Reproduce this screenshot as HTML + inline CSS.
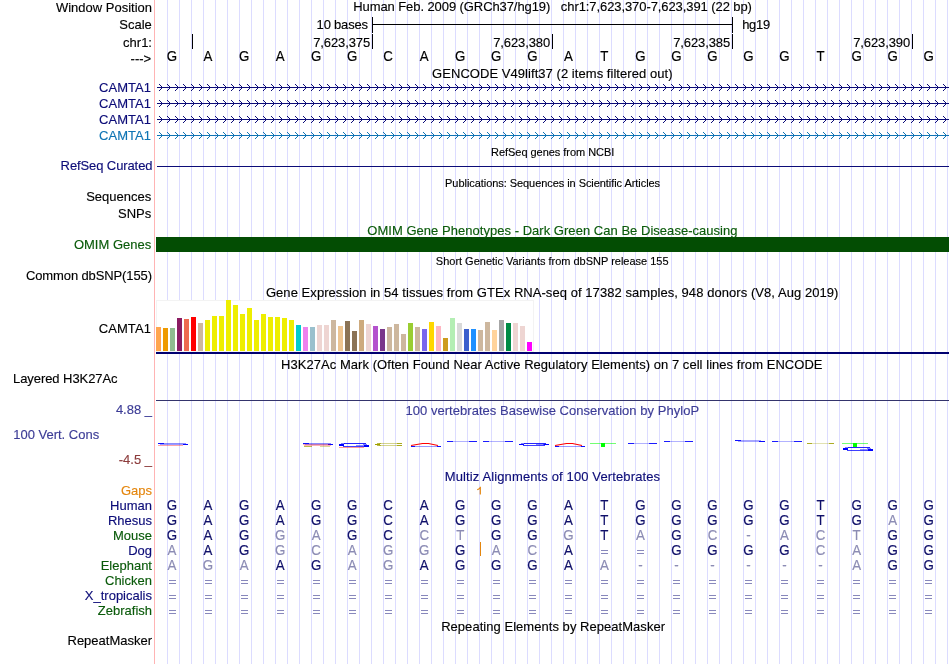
<!DOCTYPE html>
<html><head><meta charset="utf-8"><title>UCSC Genome Browser</title>
<style>html,body{margin:0;padding:0;background:#fff;}body{width:950px;height:664px;overflow:hidden;font-family:"Liberation Sans",sans-serif;}svg{display:block;will-change:transform;}</style>
</head><body>
<svg width="950" height="664" viewBox="0 0 950 664" shape-rendering="crispEdges" font-family="'Liberation Sans', sans-serif" font-size="13.0" fill="#000">
<g id="guides">
<rect x="167" y="0" width="1" height="664" fill="#dcdcff"/>
<rect x="179" y="0" width="1" height="664" fill="#dcdcff"/>
<rect x="191" y="0" width="1" height="664" fill="#dcdcff"/>
<rect x="203" y="0" width="1" height="664" fill="#dcdcff"/>
<rect x="215" y="0" width="1" height="664" fill="#dcdcff"/>
<rect x="227" y="0" width="1" height="664" fill="#dcdcff"/>
<rect x="239" y="0" width="1" height="664" fill="#dcdcff"/>
<rect x="251" y="0" width="1" height="664" fill="#dcdcff"/>
<rect x="263" y="0" width="1" height="664" fill="#dcdcff"/>
<rect x="275" y="0" width="1" height="664" fill="#dcdcff"/>
<rect x="287" y="0" width="1" height="664" fill="#dcdcff"/>
<rect x="299" y="0" width="1" height="664" fill="#dcdcff"/>
<rect x="311" y="0" width="1" height="664" fill="#dcdcff"/>
<rect x="323" y="0" width="1" height="664" fill="#dcdcff"/>
<rect x="335" y="0" width="1" height="664" fill="#dcdcff"/>
<rect x="347" y="0" width="1" height="664" fill="#dcdcff"/>
<rect x="359" y="0" width="1" height="664" fill="#dcdcff"/>
<rect x="371" y="0" width="1" height="664" fill="#dcdcff"/>
<rect x="383" y="0" width="1" height="664" fill="#dcdcff"/>
<rect x="395" y="0" width="1" height="664" fill="#dcdcff"/>
<rect x="407" y="0" width="1" height="664" fill="#dcdcff"/>
<rect x="419" y="0" width="1" height="664" fill="#dcdcff"/>
<rect x="431" y="0" width="1" height="664" fill="#dcdcff"/>
<rect x="443" y="0" width="1" height="664" fill="#dcdcff"/>
<rect x="455" y="0" width="1" height="664" fill="#dcdcff"/>
<rect x="467" y="0" width="1" height="664" fill="#dcdcff"/>
<rect x="479" y="0" width="1" height="664" fill="#dcdcff"/>
<rect x="491" y="0" width="1" height="664" fill="#dcdcff"/>
<rect x="503" y="0" width="1" height="664" fill="#dcdcff"/>
<rect x="515" y="0" width="1" height="664" fill="#dcdcff"/>
<rect x="527" y="0" width="1" height="664" fill="#dcdcff"/>
<rect x="539" y="0" width="1" height="664" fill="#dcdcff"/>
<rect x="551" y="0" width="1" height="664" fill="#dcdcff"/>
<rect x="563" y="0" width="1" height="664" fill="#dcdcff"/>
<rect x="575" y="0" width="1" height="664" fill="#dcdcff"/>
<rect x="587" y="0" width="1" height="664" fill="#dcdcff"/>
<rect x="599" y="0" width="1" height="664" fill="#dcdcff"/>
<rect x="611" y="0" width="1" height="664" fill="#dcdcff"/>
<rect x="623" y="0" width="1" height="664" fill="#dcdcff"/>
<rect x="635" y="0" width="1" height="664" fill="#dcdcff"/>
<rect x="647" y="0" width="1" height="664" fill="#dcdcff"/>
<rect x="659" y="0" width="1" height="664" fill="#dcdcff"/>
<rect x="671" y="0" width="1" height="664" fill="#dcdcff"/>
<rect x="683" y="0" width="1" height="664" fill="#dcdcff"/>
<rect x="695" y="0" width="1" height="664" fill="#dcdcff"/>
<rect x="707" y="0" width="1" height="664" fill="#dcdcff"/>
<rect x="719" y="0" width="1" height="664" fill="#dcdcff"/>
<rect x="731" y="0" width="1" height="664" fill="#dcdcff"/>
<rect x="743" y="0" width="1" height="664" fill="#dcdcff"/>
<rect x="755" y="0" width="1" height="664" fill="#dcdcff"/>
<rect x="767" y="0" width="1" height="664" fill="#dcdcff"/>
<rect x="779" y="0" width="1" height="664" fill="#dcdcff"/>
<rect x="791" y="0" width="1" height="664" fill="#dcdcff"/>
<rect x="803" y="0" width="1" height="664" fill="#dcdcff"/>
<rect x="815" y="0" width="1" height="664" fill="#dcdcff"/>
<rect x="827" y="0" width="1" height="664" fill="#dcdcff"/>
<rect x="839" y="0" width="1" height="664" fill="#dcdcff"/>
<rect x="851" y="0" width="1" height="664" fill="#dcdcff"/>
<rect x="863" y="0" width="1" height="664" fill="#dcdcff"/>
<rect x="875" y="0" width="1" height="664" fill="#dcdcff"/>
<rect x="887" y="0" width="1" height="664" fill="#dcdcff"/>
<rect x="899" y="0" width="1" height="664" fill="#dcdcff"/>
<rect x="911" y="0" width="1" height="664" fill="#dcdcff"/>
<rect x="923" y="0" width="1" height="664" fill="#dcdcff"/>
<rect x="935" y="0" width="1" height="664" fill="#dcdcff"/>
<rect x="947" y="0" width="1" height="664" fill="#dcdcff"/>
<rect x="154" y="0" width="1" height="664" fill="#ffb4b4"/>
</g>
<g id="ruler">
<rect x="372" y="24" width="361" height="1" fill="#000"/>
<rect x="372" y="17" width="1" height="16" fill="#000"/>
<rect x="732" y="17" width="1" height="16" fill="#000"/>
<rect x="192" y="34" width="1" height="15" fill="#000"/>
<rect x="372" y="34" width="1" height="15" fill="#000"/>
<rect x="552" y="34" width="1" height="15" fill="#000"/>
<rect x="732" y="34" width="1" height="15" fill="#000"/>
<rect x="912" y="34" width="1" height="15" fill="#000"/>
</g>
<g id="gencode">
<rect x="157" y="87" width="792" height="1" fill="#0c0c78"/>
<path d="M161 86h1v1h-1zM161 88h1v1h-1zM160 85h1v1h-1zM160 89h1v1h-1zM159 84h1v1h-1zM159 90h1v1h-1zM169 86h1v1h-1zM169 88h1v1h-1zM168 85h1v1h-1zM168 89h1v1h-1zM167 84h1v1h-1zM167 90h1v1h-1zM177 86h1v1h-1zM177 88h1v1h-1zM176 85h1v1h-1zM176 89h1v1h-1zM175 84h1v1h-1zM175 90h1v1h-1zM185 86h1v1h-1zM185 88h1v1h-1zM184 85h1v1h-1zM184 89h1v1h-1zM183 84h1v1h-1zM183 90h1v1h-1zM193 86h1v1h-1zM193 88h1v1h-1zM192 85h1v1h-1zM192 89h1v1h-1zM191 84h1v1h-1zM191 90h1v1h-1zM201 86h1v1h-1zM201 88h1v1h-1zM200 85h1v1h-1zM200 89h1v1h-1zM199 84h1v1h-1zM199 90h1v1h-1zM209 86h1v1h-1zM209 88h1v1h-1zM208 85h1v1h-1zM208 89h1v1h-1zM207 84h1v1h-1zM207 90h1v1h-1zM217 86h1v1h-1zM217 88h1v1h-1zM216 85h1v1h-1zM216 89h1v1h-1zM215 84h1v1h-1zM215 90h1v1h-1zM225 86h1v1h-1zM225 88h1v1h-1zM224 85h1v1h-1zM224 89h1v1h-1zM223 84h1v1h-1zM223 90h1v1h-1zM233 86h1v1h-1zM233 88h1v1h-1zM232 85h1v1h-1zM232 89h1v1h-1zM231 84h1v1h-1zM231 90h1v1h-1zM241 86h1v1h-1zM241 88h1v1h-1zM240 85h1v1h-1zM240 89h1v1h-1zM239 84h1v1h-1zM239 90h1v1h-1zM249 86h1v1h-1zM249 88h1v1h-1zM248 85h1v1h-1zM248 89h1v1h-1zM247 84h1v1h-1zM247 90h1v1h-1zM257 86h1v1h-1zM257 88h1v1h-1zM256 85h1v1h-1zM256 89h1v1h-1zM255 84h1v1h-1zM255 90h1v1h-1zM265 86h1v1h-1zM265 88h1v1h-1zM264 85h1v1h-1zM264 89h1v1h-1zM263 84h1v1h-1zM263 90h1v1h-1zM273 86h1v1h-1zM273 88h1v1h-1zM272 85h1v1h-1zM272 89h1v1h-1zM271 84h1v1h-1zM271 90h1v1h-1zM281 86h1v1h-1zM281 88h1v1h-1zM280 85h1v1h-1zM280 89h1v1h-1zM279 84h1v1h-1zM279 90h1v1h-1zM289 86h1v1h-1zM289 88h1v1h-1zM288 85h1v1h-1zM288 89h1v1h-1zM287 84h1v1h-1zM287 90h1v1h-1zM297 86h1v1h-1zM297 88h1v1h-1zM296 85h1v1h-1zM296 89h1v1h-1zM295 84h1v1h-1zM295 90h1v1h-1zM305 86h1v1h-1zM305 88h1v1h-1zM304 85h1v1h-1zM304 89h1v1h-1zM303 84h1v1h-1zM303 90h1v1h-1zM313 86h1v1h-1zM313 88h1v1h-1zM312 85h1v1h-1zM312 89h1v1h-1zM311 84h1v1h-1zM311 90h1v1h-1zM321 86h1v1h-1zM321 88h1v1h-1zM320 85h1v1h-1zM320 89h1v1h-1zM319 84h1v1h-1zM319 90h1v1h-1zM329 86h1v1h-1zM329 88h1v1h-1zM328 85h1v1h-1zM328 89h1v1h-1zM327 84h1v1h-1zM327 90h1v1h-1zM337 86h1v1h-1zM337 88h1v1h-1zM336 85h1v1h-1zM336 89h1v1h-1zM335 84h1v1h-1zM335 90h1v1h-1zM345 86h1v1h-1zM345 88h1v1h-1zM344 85h1v1h-1zM344 89h1v1h-1zM343 84h1v1h-1zM343 90h1v1h-1zM353 86h1v1h-1zM353 88h1v1h-1zM352 85h1v1h-1zM352 89h1v1h-1zM351 84h1v1h-1zM351 90h1v1h-1zM361 86h1v1h-1zM361 88h1v1h-1zM360 85h1v1h-1zM360 89h1v1h-1zM359 84h1v1h-1zM359 90h1v1h-1zM369 86h1v1h-1zM369 88h1v1h-1zM368 85h1v1h-1zM368 89h1v1h-1zM367 84h1v1h-1zM367 90h1v1h-1zM377 86h1v1h-1zM377 88h1v1h-1zM376 85h1v1h-1zM376 89h1v1h-1zM375 84h1v1h-1zM375 90h1v1h-1zM385 86h1v1h-1zM385 88h1v1h-1zM384 85h1v1h-1zM384 89h1v1h-1zM383 84h1v1h-1zM383 90h1v1h-1zM393 86h1v1h-1zM393 88h1v1h-1zM392 85h1v1h-1zM392 89h1v1h-1zM391 84h1v1h-1zM391 90h1v1h-1zM401 86h1v1h-1zM401 88h1v1h-1zM400 85h1v1h-1zM400 89h1v1h-1zM399 84h1v1h-1zM399 90h1v1h-1zM409 86h1v1h-1zM409 88h1v1h-1zM408 85h1v1h-1zM408 89h1v1h-1zM407 84h1v1h-1zM407 90h1v1h-1zM417 86h1v1h-1zM417 88h1v1h-1zM416 85h1v1h-1zM416 89h1v1h-1zM415 84h1v1h-1zM415 90h1v1h-1zM425 86h1v1h-1zM425 88h1v1h-1zM424 85h1v1h-1zM424 89h1v1h-1zM423 84h1v1h-1zM423 90h1v1h-1zM433 86h1v1h-1zM433 88h1v1h-1zM432 85h1v1h-1zM432 89h1v1h-1zM431 84h1v1h-1zM431 90h1v1h-1zM441 86h1v1h-1zM441 88h1v1h-1zM440 85h1v1h-1zM440 89h1v1h-1zM439 84h1v1h-1zM439 90h1v1h-1zM449 86h1v1h-1zM449 88h1v1h-1zM448 85h1v1h-1zM448 89h1v1h-1zM447 84h1v1h-1zM447 90h1v1h-1zM457 86h1v1h-1zM457 88h1v1h-1zM456 85h1v1h-1zM456 89h1v1h-1zM455 84h1v1h-1zM455 90h1v1h-1zM465 86h1v1h-1zM465 88h1v1h-1zM464 85h1v1h-1zM464 89h1v1h-1zM463 84h1v1h-1zM463 90h1v1h-1zM473 86h1v1h-1zM473 88h1v1h-1zM472 85h1v1h-1zM472 89h1v1h-1zM471 84h1v1h-1zM471 90h1v1h-1zM481 86h1v1h-1zM481 88h1v1h-1zM480 85h1v1h-1zM480 89h1v1h-1zM479 84h1v1h-1zM479 90h1v1h-1zM489 86h1v1h-1zM489 88h1v1h-1zM488 85h1v1h-1zM488 89h1v1h-1zM487 84h1v1h-1zM487 90h1v1h-1zM497 86h1v1h-1zM497 88h1v1h-1zM496 85h1v1h-1zM496 89h1v1h-1zM495 84h1v1h-1zM495 90h1v1h-1zM505 86h1v1h-1zM505 88h1v1h-1zM504 85h1v1h-1zM504 89h1v1h-1zM503 84h1v1h-1zM503 90h1v1h-1zM513 86h1v1h-1zM513 88h1v1h-1zM512 85h1v1h-1zM512 89h1v1h-1zM511 84h1v1h-1zM511 90h1v1h-1zM521 86h1v1h-1zM521 88h1v1h-1zM520 85h1v1h-1zM520 89h1v1h-1zM519 84h1v1h-1zM519 90h1v1h-1zM529 86h1v1h-1zM529 88h1v1h-1zM528 85h1v1h-1zM528 89h1v1h-1zM527 84h1v1h-1zM527 90h1v1h-1zM537 86h1v1h-1zM537 88h1v1h-1zM536 85h1v1h-1zM536 89h1v1h-1zM535 84h1v1h-1zM535 90h1v1h-1zM545 86h1v1h-1zM545 88h1v1h-1zM544 85h1v1h-1zM544 89h1v1h-1zM543 84h1v1h-1zM543 90h1v1h-1zM553 86h1v1h-1zM553 88h1v1h-1zM552 85h1v1h-1zM552 89h1v1h-1zM551 84h1v1h-1zM551 90h1v1h-1zM561 86h1v1h-1zM561 88h1v1h-1zM560 85h1v1h-1zM560 89h1v1h-1zM559 84h1v1h-1zM559 90h1v1h-1zM569 86h1v1h-1zM569 88h1v1h-1zM568 85h1v1h-1zM568 89h1v1h-1zM567 84h1v1h-1zM567 90h1v1h-1zM577 86h1v1h-1zM577 88h1v1h-1zM576 85h1v1h-1zM576 89h1v1h-1zM575 84h1v1h-1zM575 90h1v1h-1zM585 86h1v1h-1zM585 88h1v1h-1zM584 85h1v1h-1zM584 89h1v1h-1zM583 84h1v1h-1zM583 90h1v1h-1zM593 86h1v1h-1zM593 88h1v1h-1zM592 85h1v1h-1zM592 89h1v1h-1zM591 84h1v1h-1zM591 90h1v1h-1zM601 86h1v1h-1zM601 88h1v1h-1zM600 85h1v1h-1zM600 89h1v1h-1zM599 84h1v1h-1zM599 90h1v1h-1zM609 86h1v1h-1zM609 88h1v1h-1zM608 85h1v1h-1zM608 89h1v1h-1zM607 84h1v1h-1zM607 90h1v1h-1zM617 86h1v1h-1zM617 88h1v1h-1zM616 85h1v1h-1zM616 89h1v1h-1zM615 84h1v1h-1zM615 90h1v1h-1zM625 86h1v1h-1zM625 88h1v1h-1zM624 85h1v1h-1zM624 89h1v1h-1zM623 84h1v1h-1zM623 90h1v1h-1zM633 86h1v1h-1zM633 88h1v1h-1zM632 85h1v1h-1zM632 89h1v1h-1zM631 84h1v1h-1zM631 90h1v1h-1zM641 86h1v1h-1zM641 88h1v1h-1zM640 85h1v1h-1zM640 89h1v1h-1zM639 84h1v1h-1zM639 90h1v1h-1zM649 86h1v1h-1zM649 88h1v1h-1zM648 85h1v1h-1zM648 89h1v1h-1zM647 84h1v1h-1zM647 90h1v1h-1zM657 86h1v1h-1zM657 88h1v1h-1zM656 85h1v1h-1zM656 89h1v1h-1zM655 84h1v1h-1zM655 90h1v1h-1zM665 86h1v1h-1zM665 88h1v1h-1zM664 85h1v1h-1zM664 89h1v1h-1zM663 84h1v1h-1zM663 90h1v1h-1zM673 86h1v1h-1zM673 88h1v1h-1zM672 85h1v1h-1zM672 89h1v1h-1zM671 84h1v1h-1zM671 90h1v1h-1zM681 86h1v1h-1zM681 88h1v1h-1zM680 85h1v1h-1zM680 89h1v1h-1zM679 84h1v1h-1zM679 90h1v1h-1zM689 86h1v1h-1zM689 88h1v1h-1zM688 85h1v1h-1zM688 89h1v1h-1zM687 84h1v1h-1zM687 90h1v1h-1zM697 86h1v1h-1zM697 88h1v1h-1zM696 85h1v1h-1zM696 89h1v1h-1zM695 84h1v1h-1zM695 90h1v1h-1zM705 86h1v1h-1zM705 88h1v1h-1zM704 85h1v1h-1zM704 89h1v1h-1zM703 84h1v1h-1zM703 90h1v1h-1zM713 86h1v1h-1zM713 88h1v1h-1zM712 85h1v1h-1zM712 89h1v1h-1zM711 84h1v1h-1zM711 90h1v1h-1zM721 86h1v1h-1zM721 88h1v1h-1zM720 85h1v1h-1zM720 89h1v1h-1zM719 84h1v1h-1zM719 90h1v1h-1zM729 86h1v1h-1zM729 88h1v1h-1zM728 85h1v1h-1zM728 89h1v1h-1zM727 84h1v1h-1zM727 90h1v1h-1zM737 86h1v1h-1zM737 88h1v1h-1zM736 85h1v1h-1zM736 89h1v1h-1zM735 84h1v1h-1zM735 90h1v1h-1zM745 86h1v1h-1zM745 88h1v1h-1zM744 85h1v1h-1zM744 89h1v1h-1zM743 84h1v1h-1zM743 90h1v1h-1zM753 86h1v1h-1zM753 88h1v1h-1zM752 85h1v1h-1zM752 89h1v1h-1zM751 84h1v1h-1zM751 90h1v1h-1zM761 86h1v1h-1zM761 88h1v1h-1zM760 85h1v1h-1zM760 89h1v1h-1zM759 84h1v1h-1zM759 90h1v1h-1zM769 86h1v1h-1zM769 88h1v1h-1zM768 85h1v1h-1zM768 89h1v1h-1zM767 84h1v1h-1zM767 90h1v1h-1zM777 86h1v1h-1zM777 88h1v1h-1zM776 85h1v1h-1zM776 89h1v1h-1zM775 84h1v1h-1zM775 90h1v1h-1zM785 86h1v1h-1zM785 88h1v1h-1zM784 85h1v1h-1zM784 89h1v1h-1zM783 84h1v1h-1zM783 90h1v1h-1zM793 86h1v1h-1zM793 88h1v1h-1zM792 85h1v1h-1zM792 89h1v1h-1zM791 84h1v1h-1zM791 90h1v1h-1zM801 86h1v1h-1zM801 88h1v1h-1zM800 85h1v1h-1zM800 89h1v1h-1zM799 84h1v1h-1zM799 90h1v1h-1zM809 86h1v1h-1zM809 88h1v1h-1zM808 85h1v1h-1zM808 89h1v1h-1zM807 84h1v1h-1zM807 90h1v1h-1zM817 86h1v1h-1zM817 88h1v1h-1zM816 85h1v1h-1zM816 89h1v1h-1zM815 84h1v1h-1zM815 90h1v1h-1zM825 86h1v1h-1zM825 88h1v1h-1zM824 85h1v1h-1zM824 89h1v1h-1zM823 84h1v1h-1zM823 90h1v1h-1zM833 86h1v1h-1zM833 88h1v1h-1zM832 85h1v1h-1zM832 89h1v1h-1zM831 84h1v1h-1zM831 90h1v1h-1zM841 86h1v1h-1zM841 88h1v1h-1zM840 85h1v1h-1zM840 89h1v1h-1zM839 84h1v1h-1zM839 90h1v1h-1zM849 86h1v1h-1zM849 88h1v1h-1zM848 85h1v1h-1zM848 89h1v1h-1zM847 84h1v1h-1zM847 90h1v1h-1zM857 86h1v1h-1zM857 88h1v1h-1zM856 85h1v1h-1zM856 89h1v1h-1zM855 84h1v1h-1zM855 90h1v1h-1zM865 86h1v1h-1zM865 88h1v1h-1zM864 85h1v1h-1zM864 89h1v1h-1zM863 84h1v1h-1zM863 90h1v1h-1zM873 86h1v1h-1zM873 88h1v1h-1zM872 85h1v1h-1zM872 89h1v1h-1zM871 84h1v1h-1zM871 90h1v1h-1zM881 86h1v1h-1zM881 88h1v1h-1zM880 85h1v1h-1zM880 89h1v1h-1zM879 84h1v1h-1zM879 90h1v1h-1zM889 86h1v1h-1zM889 88h1v1h-1zM888 85h1v1h-1zM888 89h1v1h-1zM887 84h1v1h-1zM887 90h1v1h-1zM897 86h1v1h-1zM897 88h1v1h-1zM896 85h1v1h-1zM896 89h1v1h-1zM895 84h1v1h-1zM895 90h1v1h-1zM905 86h1v1h-1zM905 88h1v1h-1zM904 85h1v1h-1zM904 89h1v1h-1zM903 84h1v1h-1zM903 90h1v1h-1zM913 86h1v1h-1zM913 88h1v1h-1zM912 85h1v1h-1zM912 89h1v1h-1zM911 84h1v1h-1zM911 90h1v1h-1zM921 86h1v1h-1zM921 88h1v1h-1zM920 85h1v1h-1zM920 89h1v1h-1zM919 84h1v1h-1zM919 90h1v1h-1zM929 86h1v1h-1zM929 88h1v1h-1zM928 85h1v1h-1zM928 89h1v1h-1zM927 84h1v1h-1zM927 90h1v1h-1zM937 86h1v1h-1zM937 88h1v1h-1zM936 85h1v1h-1zM936 89h1v1h-1zM935 84h1v1h-1zM935 90h1v1h-1zM945 86h1v1h-1zM945 88h1v1h-1zM944 85h1v1h-1zM944 89h1v1h-1zM943 84h1v1h-1zM943 90h1v1h-1z" fill="#0c0c78"/>
<rect x="157" y="103" width="792" height="1" fill="#0c0c78"/>
<path d="M161 102h1v1h-1zM161 104h1v1h-1zM160 101h1v1h-1zM160 105h1v1h-1zM159 100h1v1h-1zM159 106h1v1h-1zM169 102h1v1h-1zM169 104h1v1h-1zM168 101h1v1h-1zM168 105h1v1h-1zM167 100h1v1h-1zM167 106h1v1h-1zM177 102h1v1h-1zM177 104h1v1h-1zM176 101h1v1h-1zM176 105h1v1h-1zM175 100h1v1h-1zM175 106h1v1h-1zM185 102h1v1h-1zM185 104h1v1h-1zM184 101h1v1h-1zM184 105h1v1h-1zM183 100h1v1h-1zM183 106h1v1h-1zM193 102h1v1h-1zM193 104h1v1h-1zM192 101h1v1h-1zM192 105h1v1h-1zM191 100h1v1h-1zM191 106h1v1h-1zM201 102h1v1h-1zM201 104h1v1h-1zM200 101h1v1h-1zM200 105h1v1h-1zM199 100h1v1h-1zM199 106h1v1h-1zM209 102h1v1h-1zM209 104h1v1h-1zM208 101h1v1h-1zM208 105h1v1h-1zM207 100h1v1h-1zM207 106h1v1h-1zM217 102h1v1h-1zM217 104h1v1h-1zM216 101h1v1h-1zM216 105h1v1h-1zM215 100h1v1h-1zM215 106h1v1h-1zM225 102h1v1h-1zM225 104h1v1h-1zM224 101h1v1h-1zM224 105h1v1h-1zM223 100h1v1h-1zM223 106h1v1h-1zM233 102h1v1h-1zM233 104h1v1h-1zM232 101h1v1h-1zM232 105h1v1h-1zM231 100h1v1h-1zM231 106h1v1h-1zM241 102h1v1h-1zM241 104h1v1h-1zM240 101h1v1h-1zM240 105h1v1h-1zM239 100h1v1h-1zM239 106h1v1h-1zM249 102h1v1h-1zM249 104h1v1h-1zM248 101h1v1h-1zM248 105h1v1h-1zM247 100h1v1h-1zM247 106h1v1h-1zM257 102h1v1h-1zM257 104h1v1h-1zM256 101h1v1h-1zM256 105h1v1h-1zM255 100h1v1h-1zM255 106h1v1h-1zM265 102h1v1h-1zM265 104h1v1h-1zM264 101h1v1h-1zM264 105h1v1h-1zM263 100h1v1h-1zM263 106h1v1h-1zM273 102h1v1h-1zM273 104h1v1h-1zM272 101h1v1h-1zM272 105h1v1h-1zM271 100h1v1h-1zM271 106h1v1h-1zM281 102h1v1h-1zM281 104h1v1h-1zM280 101h1v1h-1zM280 105h1v1h-1zM279 100h1v1h-1zM279 106h1v1h-1zM289 102h1v1h-1zM289 104h1v1h-1zM288 101h1v1h-1zM288 105h1v1h-1zM287 100h1v1h-1zM287 106h1v1h-1zM297 102h1v1h-1zM297 104h1v1h-1zM296 101h1v1h-1zM296 105h1v1h-1zM295 100h1v1h-1zM295 106h1v1h-1zM305 102h1v1h-1zM305 104h1v1h-1zM304 101h1v1h-1zM304 105h1v1h-1zM303 100h1v1h-1zM303 106h1v1h-1zM313 102h1v1h-1zM313 104h1v1h-1zM312 101h1v1h-1zM312 105h1v1h-1zM311 100h1v1h-1zM311 106h1v1h-1zM321 102h1v1h-1zM321 104h1v1h-1zM320 101h1v1h-1zM320 105h1v1h-1zM319 100h1v1h-1zM319 106h1v1h-1zM329 102h1v1h-1zM329 104h1v1h-1zM328 101h1v1h-1zM328 105h1v1h-1zM327 100h1v1h-1zM327 106h1v1h-1zM337 102h1v1h-1zM337 104h1v1h-1zM336 101h1v1h-1zM336 105h1v1h-1zM335 100h1v1h-1zM335 106h1v1h-1zM345 102h1v1h-1zM345 104h1v1h-1zM344 101h1v1h-1zM344 105h1v1h-1zM343 100h1v1h-1zM343 106h1v1h-1zM353 102h1v1h-1zM353 104h1v1h-1zM352 101h1v1h-1zM352 105h1v1h-1zM351 100h1v1h-1zM351 106h1v1h-1zM361 102h1v1h-1zM361 104h1v1h-1zM360 101h1v1h-1zM360 105h1v1h-1zM359 100h1v1h-1zM359 106h1v1h-1zM369 102h1v1h-1zM369 104h1v1h-1zM368 101h1v1h-1zM368 105h1v1h-1zM367 100h1v1h-1zM367 106h1v1h-1zM377 102h1v1h-1zM377 104h1v1h-1zM376 101h1v1h-1zM376 105h1v1h-1zM375 100h1v1h-1zM375 106h1v1h-1zM385 102h1v1h-1zM385 104h1v1h-1zM384 101h1v1h-1zM384 105h1v1h-1zM383 100h1v1h-1zM383 106h1v1h-1zM393 102h1v1h-1zM393 104h1v1h-1zM392 101h1v1h-1zM392 105h1v1h-1zM391 100h1v1h-1zM391 106h1v1h-1zM401 102h1v1h-1zM401 104h1v1h-1zM400 101h1v1h-1zM400 105h1v1h-1zM399 100h1v1h-1zM399 106h1v1h-1zM409 102h1v1h-1zM409 104h1v1h-1zM408 101h1v1h-1zM408 105h1v1h-1zM407 100h1v1h-1zM407 106h1v1h-1zM417 102h1v1h-1zM417 104h1v1h-1zM416 101h1v1h-1zM416 105h1v1h-1zM415 100h1v1h-1zM415 106h1v1h-1zM425 102h1v1h-1zM425 104h1v1h-1zM424 101h1v1h-1zM424 105h1v1h-1zM423 100h1v1h-1zM423 106h1v1h-1zM433 102h1v1h-1zM433 104h1v1h-1zM432 101h1v1h-1zM432 105h1v1h-1zM431 100h1v1h-1zM431 106h1v1h-1zM441 102h1v1h-1zM441 104h1v1h-1zM440 101h1v1h-1zM440 105h1v1h-1zM439 100h1v1h-1zM439 106h1v1h-1zM449 102h1v1h-1zM449 104h1v1h-1zM448 101h1v1h-1zM448 105h1v1h-1zM447 100h1v1h-1zM447 106h1v1h-1zM457 102h1v1h-1zM457 104h1v1h-1zM456 101h1v1h-1zM456 105h1v1h-1zM455 100h1v1h-1zM455 106h1v1h-1zM465 102h1v1h-1zM465 104h1v1h-1zM464 101h1v1h-1zM464 105h1v1h-1zM463 100h1v1h-1zM463 106h1v1h-1zM473 102h1v1h-1zM473 104h1v1h-1zM472 101h1v1h-1zM472 105h1v1h-1zM471 100h1v1h-1zM471 106h1v1h-1zM481 102h1v1h-1zM481 104h1v1h-1zM480 101h1v1h-1zM480 105h1v1h-1zM479 100h1v1h-1zM479 106h1v1h-1zM489 102h1v1h-1zM489 104h1v1h-1zM488 101h1v1h-1zM488 105h1v1h-1zM487 100h1v1h-1zM487 106h1v1h-1zM497 102h1v1h-1zM497 104h1v1h-1zM496 101h1v1h-1zM496 105h1v1h-1zM495 100h1v1h-1zM495 106h1v1h-1zM505 102h1v1h-1zM505 104h1v1h-1zM504 101h1v1h-1zM504 105h1v1h-1zM503 100h1v1h-1zM503 106h1v1h-1zM513 102h1v1h-1zM513 104h1v1h-1zM512 101h1v1h-1zM512 105h1v1h-1zM511 100h1v1h-1zM511 106h1v1h-1zM521 102h1v1h-1zM521 104h1v1h-1zM520 101h1v1h-1zM520 105h1v1h-1zM519 100h1v1h-1zM519 106h1v1h-1zM529 102h1v1h-1zM529 104h1v1h-1zM528 101h1v1h-1zM528 105h1v1h-1zM527 100h1v1h-1zM527 106h1v1h-1zM537 102h1v1h-1zM537 104h1v1h-1zM536 101h1v1h-1zM536 105h1v1h-1zM535 100h1v1h-1zM535 106h1v1h-1zM545 102h1v1h-1zM545 104h1v1h-1zM544 101h1v1h-1zM544 105h1v1h-1zM543 100h1v1h-1zM543 106h1v1h-1zM553 102h1v1h-1zM553 104h1v1h-1zM552 101h1v1h-1zM552 105h1v1h-1zM551 100h1v1h-1zM551 106h1v1h-1zM561 102h1v1h-1zM561 104h1v1h-1zM560 101h1v1h-1zM560 105h1v1h-1zM559 100h1v1h-1zM559 106h1v1h-1zM569 102h1v1h-1zM569 104h1v1h-1zM568 101h1v1h-1zM568 105h1v1h-1zM567 100h1v1h-1zM567 106h1v1h-1zM577 102h1v1h-1zM577 104h1v1h-1zM576 101h1v1h-1zM576 105h1v1h-1zM575 100h1v1h-1zM575 106h1v1h-1zM585 102h1v1h-1zM585 104h1v1h-1zM584 101h1v1h-1zM584 105h1v1h-1zM583 100h1v1h-1zM583 106h1v1h-1zM593 102h1v1h-1zM593 104h1v1h-1zM592 101h1v1h-1zM592 105h1v1h-1zM591 100h1v1h-1zM591 106h1v1h-1zM601 102h1v1h-1zM601 104h1v1h-1zM600 101h1v1h-1zM600 105h1v1h-1zM599 100h1v1h-1zM599 106h1v1h-1zM609 102h1v1h-1zM609 104h1v1h-1zM608 101h1v1h-1zM608 105h1v1h-1zM607 100h1v1h-1zM607 106h1v1h-1zM617 102h1v1h-1zM617 104h1v1h-1zM616 101h1v1h-1zM616 105h1v1h-1zM615 100h1v1h-1zM615 106h1v1h-1zM625 102h1v1h-1zM625 104h1v1h-1zM624 101h1v1h-1zM624 105h1v1h-1zM623 100h1v1h-1zM623 106h1v1h-1zM633 102h1v1h-1zM633 104h1v1h-1zM632 101h1v1h-1zM632 105h1v1h-1zM631 100h1v1h-1zM631 106h1v1h-1zM641 102h1v1h-1zM641 104h1v1h-1zM640 101h1v1h-1zM640 105h1v1h-1zM639 100h1v1h-1zM639 106h1v1h-1zM649 102h1v1h-1zM649 104h1v1h-1zM648 101h1v1h-1zM648 105h1v1h-1zM647 100h1v1h-1zM647 106h1v1h-1zM657 102h1v1h-1zM657 104h1v1h-1zM656 101h1v1h-1zM656 105h1v1h-1zM655 100h1v1h-1zM655 106h1v1h-1zM665 102h1v1h-1zM665 104h1v1h-1zM664 101h1v1h-1zM664 105h1v1h-1zM663 100h1v1h-1zM663 106h1v1h-1zM673 102h1v1h-1zM673 104h1v1h-1zM672 101h1v1h-1zM672 105h1v1h-1zM671 100h1v1h-1zM671 106h1v1h-1zM681 102h1v1h-1zM681 104h1v1h-1zM680 101h1v1h-1zM680 105h1v1h-1zM679 100h1v1h-1zM679 106h1v1h-1zM689 102h1v1h-1zM689 104h1v1h-1zM688 101h1v1h-1zM688 105h1v1h-1zM687 100h1v1h-1zM687 106h1v1h-1zM697 102h1v1h-1zM697 104h1v1h-1zM696 101h1v1h-1zM696 105h1v1h-1zM695 100h1v1h-1zM695 106h1v1h-1zM705 102h1v1h-1zM705 104h1v1h-1zM704 101h1v1h-1zM704 105h1v1h-1zM703 100h1v1h-1zM703 106h1v1h-1zM713 102h1v1h-1zM713 104h1v1h-1zM712 101h1v1h-1zM712 105h1v1h-1zM711 100h1v1h-1zM711 106h1v1h-1zM721 102h1v1h-1zM721 104h1v1h-1zM720 101h1v1h-1zM720 105h1v1h-1zM719 100h1v1h-1zM719 106h1v1h-1zM729 102h1v1h-1zM729 104h1v1h-1zM728 101h1v1h-1zM728 105h1v1h-1zM727 100h1v1h-1zM727 106h1v1h-1zM737 102h1v1h-1zM737 104h1v1h-1zM736 101h1v1h-1zM736 105h1v1h-1zM735 100h1v1h-1zM735 106h1v1h-1zM745 102h1v1h-1zM745 104h1v1h-1zM744 101h1v1h-1zM744 105h1v1h-1zM743 100h1v1h-1zM743 106h1v1h-1zM753 102h1v1h-1zM753 104h1v1h-1zM752 101h1v1h-1zM752 105h1v1h-1zM751 100h1v1h-1zM751 106h1v1h-1zM761 102h1v1h-1zM761 104h1v1h-1zM760 101h1v1h-1zM760 105h1v1h-1zM759 100h1v1h-1zM759 106h1v1h-1zM769 102h1v1h-1zM769 104h1v1h-1zM768 101h1v1h-1zM768 105h1v1h-1zM767 100h1v1h-1zM767 106h1v1h-1zM777 102h1v1h-1zM777 104h1v1h-1zM776 101h1v1h-1zM776 105h1v1h-1zM775 100h1v1h-1zM775 106h1v1h-1zM785 102h1v1h-1zM785 104h1v1h-1zM784 101h1v1h-1zM784 105h1v1h-1zM783 100h1v1h-1zM783 106h1v1h-1zM793 102h1v1h-1zM793 104h1v1h-1zM792 101h1v1h-1zM792 105h1v1h-1zM791 100h1v1h-1zM791 106h1v1h-1zM801 102h1v1h-1zM801 104h1v1h-1zM800 101h1v1h-1zM800 105h1v1h-1zM799 100h1v1h-1zM799 106h1v1h-1zM809 102h1v1h-1zM809 104h1v1h-1zM808 101h1v1h-1zM808 105h1v1h-1zM807 100h1v1h-1zM807 106h1v1h-1zM817 102h1v1h-1zM817 104h1v1h-1zM816 101h1v1h-1zM816 105h1v1h-1zM815 100h1v1h-1zM815 106h1v1h-1zM825 102h1v1h-1zM825 104h1v1h-1zM824 101h1v1h-1zM824 105h1v1h-1zM823 100h1v1h-1zM823 106h1v1h-1zM833 102h1v1h-1zM833 104h1v1h-1zM832 101h1v1h-1zM832 105h1v1h-1zM831 100h1v1h-1zM831 106h1v1h-1zM841 102h1v1h-1zM841 104h1v1h-1zM840 101h1v1h-1zM840 105h1v1h-1zM839 100h1v1h-1zM839 106h1v1h-1zM849 102h1v1h-1zM849 104h1v1h-1zM848 101h1v1h-1zM848 105h1v1h-1zM847 100h1v1h-1zM847 106h1v1h-1zM857 102h1v1h-1zM857 104h1v1h-1zM856 101h1v1h-1zM856 105h1v1h-1zM855 100h1v1h-1zM855 106h1v1h-1zM865 102h1v1h-1zM865 104h1v1h-1zM864 101h1v1h-1zM864 105h1v1h-1zM863 100h1v1h-1zM863 106h1v1h-1zM873 102h1v1h-1zM873 104h1v1h-1zM872 101h1v1h-1zM872 105h1v1h-1zM871 100h1v1h-1zM871 106h1v1h-1zM881 102h1v1h-1zM881 104h1v1h-1zM880 101h1v1h-1zM880 105h1v1h-1zM879 100h1v1h-1zM879 106h1v1h-1zM889 102h1v1h-1zM889 104h1v1h-1zM888 101h1v1h-1zM888 105h1v1h-1zM887 100h1v1h-1zM887 106h1v1h-1zM897 102h1v1h-1zM897 104h1v1h-1zM896 101h1v1h-1zM896 105h1v1h-1zM895 100h1v1h-1zM895 106h1v1h-1zM905 102h1v1h-1zM905 104h1v1h-1zM904 101h1v1h-1zM904 105h1v1h-1zM903 100h1v1h-1zM903 106h1v1h-1zM913 102h1v1h-1zM913 104h1v1h-1zM912 101h1v1h-1zM912 105h1v1h-1zM911 100h1v1h-1zM911 106h1v1h-1zM921 102h1v1h-1zM921 104h1v1h-1zM920 101h1v1h-1zM920 105h1v1h-1zM919 100h1v1h-1zM919 106h1v1h-1zM929 102h1v1h-1zM929 104h1v1h-1zM928 101h1v1h-1zM928 105h1v1h-1zM927 100h1v1h-1zM927 106h1v1h-1zM937 102h1v1h-1zM937 104h1v1h-1zM936 101h1v1h-1zM936 105h1v1h-1zM935 100h1v1h-1zM935 106h1v1h-1zM945 102h1v1h-1zM945 104h1v1h-1zM944 101h1v1h-1zM944 105h1v1h-1zM943 100h1v1h-1zM943 106h1v1h-1z" fill="#0c0c78"/>
<rect x="157" y="119" width="792" height="1" fill="#0c0c78"/>
<path d="M161 118h1v1h-1zM161 120h1v1h-1zM160 117h1v1h-1zM160 121h1v1h-1zM159 116h1v1h-1zM159 122h1v1h-1zM169 118h1v1h-1zM169 120h1v1h-1zM168 117h1v1h-1zM168 121h1v1h-1zM167 116h1v1h-1zM167 122h1v1h-1zM177 118h1v1h-1zM177 120h1v1h-1zM176 117h1v1h-1zM176 121h1v1h-1zM175 116h1v1h-1zM175 122h1v1h-1zM185 118h1v1h-1zM185 120h1v1h-1zM184 117h1v1h-1zM184 121h1v1h-1zM183 116h1v1h-1zM183 122h1v1h-1zM193 118h1v1h-1zM193 120h1v1h-1zM192 117h1v1h-1zM192 121h1v1h-1zM191 116h1v1h-1zM191 122h1v1h-1zM201 118h1v1h-1zM201 120h1v1h-1zM200 117h1v1h-1zM200 121h1v1h-1zM199 116h1v1h-1zM199 122h1v1h-1zM209 118h1v1h-1zM209 120h1v1h-1zM208 117h1v1h-1zM208 121h1v1h-1zM207 116h1v1h-1zM207 122h1v1h-1zM217 118h1v1h-1zM217 120h1v1h-1zM216 117h1v1h-1zM216 121h1v1h-1zM215 116h1v1h-1zM215 122h1v1h-1zM225 118h1v1h-1zM225 120h1v1h-1zM224 117h1v1h-1zM224 121h1v1h-1zM223 116h1v1h-1zM223 122h1v1h-1zM233 118h1v1h-1zM233 120h1v1h-1zM232 117h1v1h-1zM232 121h1v1h-1zM231 116h1v1h-1zM231 122h1v1h-1zM241 118h1v1h-1zM241 120h1v1h-1zM240 117h1v1h-1zM240 121h1v1h-1zM239 116h1v1h-1zM239 122h1v1h-1zM249 118h1v1h-1zM249 120h1v1h-1zM248 117h1v1h-1zM248 121h1v1h-1zM247 116h1v1h-1zM247 122h1v1h-1zM257 118h1v1h-1zM257 120h1v1h-1zM256 117h1v1h-1zM256 121h1v1h-1zM255 116h1v1h-1zM255 122h1v1h-1zM265 118h1v1h-1zM265 120h1v1h-1zM264 117h1v1h-1zM264 121h1v1h-1zM263 116h1v1h-1zM263 122h1v1h-1zM273 118h1v1h-1zM273 120h1v1h-1zM272 117h1v1h-1zM272 121h1v1h-1zM271 116h1v1h-1zM271 122h1v1h-1zM281 118h1v1h-1zM281 120h1v1h-1zM280 117h1v1h-1zM280 121h1v1h-1zM279 116h1v1h-1zM279 122h1v1h-1zM289 118h1v1h-1zM289 120h1v1h-1zM288 117h1v1h-1zM288 121h1v1h-1zM287 116h1v1h-1zM287 122h1v1h-1zM297 118h1v1h-1zM297 120h1v1h-1zM296 117h1v1h-1zM296 121h1v1h-1zM295 116h1v1h-1zM295 122h1v1h-1zM305 118h1v1h-1zM305 120h1v1h-1zM304 117h1v1h-1zM304 121h1v1h-1zM303 116h1v1h-1zM303 122h1v1h-1zM313 118h1v1h-1zM313 120h1v1h-1zM312 117h1v1h-1zM312 121h1v1h-1zM311 116h1v1h-1zM311 122h1v1h-1zM321 118h1v1h-1zM321 120h1v1h-1zM320 117h1v1h-1zM320 121h1v1h-1zM319 116h1v1h-1zM319 122h1v1h-1zM329 118h1v1h-1zM329 120h1v1h-1zM328 117h1v1h-1zM328 121h1v1h-1zM327 116h1v1h-1zM327 122h1v1h-1zM337 118h1v1h-1zM337 120h1v1h-1zM336 117h1v1h-1zM336 121h1v1h-1zM335 116h1v1h-1zM335 122h1v1h-1zM345 118h1v1h-1zM345 120h1v1h-1zM344 117h1v1h-1zM344 121h1v1h-1zM343 116h1v1h-1zM343 122h1v1h-1zM353 118h1v1h-1zM353 120h1v1h-1zM352 117h1v1h-1zM352 121h1v1h-1zM351 116h1v1h-1zM351 122h1v1h-1zM361 118h1v1h-1zM361 120h1v1h-1zM360 117h1v1h-1zM360 121h1v1h-1zM359 116h1v1h-1zM359 122h1v1h-1zM369 118h1v1h-1zM369 120h1v1h-1zM368 117h1v1h-1zM368 121h1v1h-1zM367 116h1v1h-1zM367 122h1v1h-1zM377 118h1v1h-1zM377 120h1v1h-1zM376 117h1v1h-1zM376 121h1v1h-1zM375 116h1v1h-1zM375 122h1v1h-1zM385 118h1v1h-1zM385 120h1v1h-1zM384 117h1v1h-1zM384 121h1v1h-1zM383 116h1v1h-1zM383 122h1v1h-1zM393 118h1v1h-1zM393 120h1v1h-1zM392 117h1v1h-1zM392 121h1v1h-1zM391 116h1v1h-1zM391 122h1v1h-1zM401 118h1v1h-1zM401 120h1v1h-1zM400 117h1v1h-1zM400 121h1v1h-1zM399 116h1v1h-1zM399 122h1v1h-1zM409 118h1v1h-1zM409 120h1v1h-1zM408 117h1v1h-1zM408 121h1v1h-1zM407 116h1v1h-1zM407 122h1v1h-1zM417 118h1v1h-1zM417 120h1v1h-1zM416 117h1v1h-1zM416 121h1v1h-1zM415 116h1v1h-1zM415 122h1v1h-1zM425 118h1v1h-1zM425 120h1v1h-1zM424 117h1v1h-1zM424 121h1v1h-1zM423 116h1v1h-1zM423 122h1v1h-1zM433 118h1v1h-1zM433 120h1v1h-1zM432 117h1v1h-1zM432 121h1v1h-1zM431 116h1v1h-1zM431 122h1v1h-1zM441 118h1v1h-1zM441 120h1v1h-1zM440 117h1v1h-1zM440 121h1v1h-1zM439 116h1v1h-1zM439 122h1v1h-1zM449 118h1v1h-1zM449 120h1v1h-1zM448 117h1v1h-1zM448 121h1v1h-1zM447 116h1v1h-1zM447 122h1v1h-1zM457 118h1v1h-1zM457 120h1v1h-1zM456 117h1v1h-1zM456 121h1v1h-1zM455 116h1v1h-1zM455 122h1v1h-1zM465 118h1v1h-1zM465 120h1v1h-1zM464 117h1v1h-1zM464 121h1v1h-1zM463 116h1v1h-1zM463 122h1v1h-1zM473 118h1v1h-1zM473 120h1v1h-1zM472 117h1v1h-1zM472 121h1v1h-1zM471 116h1v1h-1zM471 122h1v1h-1zM481 118h1v1h-1zM481 120h1v1h-1zM480 117h1v1h-1zM480 121h1v1h-1zM479 116h1v1h-1zM479 122h1v1h-1zM489 118h1v1h-1zM489 120h1v1h-1zM488 117h1v1h-1zM488 121h1v1h-1zM487 116h1v1h-1zM487 122h1v1h-1zM497 118h1v1h-1zM497 120h1v1h-1zM496 117h1v1h-1zM496 121h1v1h-1zM495 116h1v1h-1zM495 122h1v1h-1zM505 118h1v1h-1zM505 120h1v1h-1zM504 117h1v1h-1zM504 121h1v1h-1zM503 116h1v1h-1zM503 122h1v1h-1zM513 118h1v1h-1zM513 120h1v1h-1zM512 117h1v1h-1zM512 121h1v1h-1zM511 116h1v1h-1zM511 122h1v1h-1zM521 118h1v1h-1zM521 120h1v1h-1zM520 117h1v1h-1zM520 121h1v1h-1zM519 116h1v1h-1zM519 122h1v1h-1zM529 118h1v1h-1zM529 120h1v1h-1zM528 117h1v1h-1zM528 121h1v1h-1zM527 116h1v1h-1zM527 122h1v1h-1zM537 118h1v1h-1zM537 120h1v1h-1zM536 117h1v1h-1zM536 121h1v1h-1zM535 116h1v1h-1zM535 122h1v1h-1zM545 118h1v1h-1zM545 120h1v1h-1zM544 117h1v1h-1zM544 121h1v1h-1zM543 116h1v1h-1zM543 122h1v1h-1zM553 118h1v1h-1zM553 120h1v1h-1zM552 117h1v1h-1zM552 121h1v1h-1zM551 116h1v1h-1zM551 122h1v1h-1zM561 118h1v1h-1zM561 120h1v1h-1zM560 117h1v1h-1zM560 121h1v1h-1zM559 116h1v1h-1zM559 122h1v1h-1zM569 118h1v1h-1zM569 120h1v1h-1zM568 117h1v1h-1zM568 121h1v1h-1zM567 116h1v1h-1zM567 122h1v1h-1zM577 118h1v1h-1zM577 120h1v1h-1zM576 117h1v1h-1zM576 121h1v1h-1zM575 116h1v1h-1zM575 122h1v1h-1zM585 118h1v1h-1zM585 120h1v1h-1zM584 117h1v1h-1zM584 121h1v1h-1zM583 116h1v1h-1zM583 122h1v1h-1zM593 118h1v1h-1zM593 120h1v1h-1zM592 117h1v1h-1zM592 121h1v1h-1zM591 116h1v1h-1zM591 122h1v1h-1zM601 118h1v1h-1zM601 120h1v1h-1zM600 117h1v1h-1zM600 121h1v1h-1zM599 116h1v1h-1zM599 122h1v1h-1zM609 118h1v1h-1zM609 120h1v1h-1zM608 117h1v1h-1zM608 121h1v1h-1zM607 116h1v1h-1zM607 122h1v1h-1zM617 118h1v1h-1zM617 120h1v1h-1zM616 117h1v1h-1zM616 121h1v1h-1zM615 116h1v1h-1zM615 122h1v1h-1zM625 118h1v1h-1zM625 120h1v1h-1zM624 117h1v1h-1zM624 121h1v1h-1zM623 116h1v1h-1zM623 122h1v1h-1zM633 118h1v1h-1zM633 120h1v1h-1zM632 117h1v1h-1zM632 121h1v1h-1zM631 116h1v1h-1zM631 122h1v1h-1zM641 118h1v1h-1zM641 120h1v1h-1zM640 117h1v1h-1zM640 121h1v1h-1zM639 116h1v1h-1zM639 122h1v1h-1zM649 118h1v1h-1zM649 120h1v1h-1zM648 117h1v1h-1zM648 121h1v1h-1zM647 116h1v1h-1zM647 122h1v1h-1zM657 118h1v1h-1zM657 120h1v1h-1zM656 117h1v1h-1zM656 121h1v1h-1zM655 116h1v1h-1zM655 122h1v1h-1zM665 118h1v1h-1zM665 120h1v1h-1zM664 117h1v1h-1zM664 121h1v1h-1zM663 116h1v1h-1zM663 122h1v1h-1zM673 118h1v1h-1zM673 120h1v1h-1zM672 117h1v1h-1zM672 121h1v1h-1zM671 116h1v1h-1zM671 122h1v1h-1zM681 118h1v1h-1zM681 120h1v1h-1zM680 117h1v1h-1zM680 121h1v1h-1zM679 116h1v1h-1zM679 122h1v1h-1zM689 118h1v1h-1zM689 120h1v1h-1zM688 117h1v1h-1zM688 121h1v1h-1zM687 116h1v1h-1zM687 122h1v1h-1zM697 118h1v1h-1zM697 120h1v1h-1zM696 117h1v1h-1zM696 121h1v1h-1zM695 116h1v1h-1zM695 122h1v1h-1zM705 118h1v1h-1zM705 120h1v1h-1zM704 117h1v1h-1zM704 121h1v1h-1zM703 116h1v1h-1zM703 122h1v1h-1zM713 118h1v1h-1zM713 120h1v1h-1zM712 117h1v1h-1zM712 121h1v1h-1zM711 116h1v1h-1zM711 122h1v1h-1zM721 118h1v1h-1zM721 120h1v1h-1zM720 117h1v1h-1zM720 121h1v1h-1zM719 116h1v1h-1zM719 122h1v1h-1zM729 118h1v1h-1zM729 120h1v1h-1zM728 117h1v1h-1zM728 121h1v1h-1zM727 116h1v1h-1zM727 122h1v1h-1zM737 118h1v1h-1zM737 120h1v1h-1zM736 117h1v1h-1zM736 121h1v1h-1zM735 116h1v1h-1zM735 122h1v1h-1zM745 118h1v1h-1zM745 120h1v1h-1zM744 117h1v1h-1zM744 121h1v1h-1zM743 116h1v1h-1zM743 122h1v1h-1zM753 118h1v1h-1zM753 120h1v1h-1zM752 117h1v1h-1zM752 121h1v1h-1zM751 116h1v1h-1zM751 122h1v1h-1zM761 118h1v1h-1zM761 120h1v1h-1zM760 117h1v1h-1zM760 121h1v1h-1zM759 116h1v1h-1zM759 122h1v1h-1zM769 118h1v1h-1zM769 120h1v1h-1zM768 117h1v1h-1zM768 121h1v1h-1zM767 116h1v1h-1zM767 122h1v1h-1zM777 118h1v1h-1zM777 120h1v1h-1zM776 117h1v1h-1zM776 121h1v1h-1zM775 116h1v1h-1zM775 122h1v1h-1zM785 118h1v1h-1zM785 120h1v1h-1zM784 117h1v1h-1zM784 121h1v1h-1zM783 116h1v1h-1zM783 122h1v1h-1zM793 118h1v1h-1zM793 120h1v1h-1zM792 117h1v1h-1zM792 121h1v1h-1zM791 116h1v1h-1zM791 122h1v1h-1zM801 118h1v1h-1zM801 120h1v1h-1zM800 117h1v1h-1zM800 121h1v1h-1zM799 116h1v1h-1zM799 122h1v1h-1zM809 118h1v1h-1zM809 120h1v1h-1zM808 117h1v1h-1zM808 121h1v1h-1zM807 116h1v1h-1zM807 122h1v1h-1zM817 118h1v1h-1zM817 120h1v1h-1zM816 117h1v1h-1zM816 121h1v1h-1zM815 116h1v1h-1zM815 122h1v1h-1zM825 118h1v1h-1zM825 120h1v1h-1zM824 117h1v1h-1zM824 121h1v1h-1zM823 116h1v1h-1zM823 122h1v1h-1zM833 118h1v1h-1zM833 120h1v1h-1zM832 117h1v1h-1zM832 121h1v1h-1zM831 116h1v1h-1zM831 122h1v1h-1zM841 118h1v1h-1zM841 120h1v1h-1zM840 117h1v1h-1zM840 121h1v1h-1zM839 116h1v1h-1zM839 122h1v1h-1zM849 118h1v1h-1zM849 120h1v1h-1zM848 117h1v1h-1zM848 121h1v1h-1zM847 116h1v1h-1zM847 122h1v1h-1zM857 118h1v1h-1zM857 120h1v1h-1zM856 117h1v1h-1zM856 121h1v1h-1zM855 116h1v1h-1zM855 122h1v1h-1zM865 118h1v1h-1zM865 120h1v1h-1zM864 117h1v1h-1zM864 121h1v1h-1zM863 116h1v1h-1zM863 122h1v1h-1zM873 118h1v1h-1zM873 120h1v1h-1zM872 117h1v1h-1zM872 121h1v1h-1zM871 116h1v1h-1zM871 122h1v1h-1zM881 118h1v1h-1zM881 120h1v1h-1zM880 117h1v1h-1zM880 121h1v1h-1zM879 116h1v1h-1zM879 122h1v1h-1zM889 118h1v1h-1zM889 120h1v1h-1zM888 117h1v1h-1zM888 121h1v1h-1zM887 116h1v1h-1zM887 122h1v1h-1zM897 118h1v1h-1zM897 120h1v1h-1zM896 117h1v1h-1zM896 121h1v1h-1zM895 116h1v1h-1zM895 122h1v1h-1zM905 118h1v1h-1zM905 120h1v1h-1zM904 117h1v1h-1zM904 121h1v1h-1zM903 116h1v1h-1zM903 122h1v1h-1zM913 118h1v1h-1zM913 120h1v1h-1zM912 117h1v1h-1zM912 121h1v1h-1zM911 116h1v1h-1zM911 122h1v1h-1zM921 118h1v1h-1zM921 120h1v1h-1zM920 117h1v1h-1zM920 121h1v1h-1zM919 116h1v1h-1zM919 122h1v1h-1zM929 118h1v1h-1zM929 120h1v1h-1zM928 117h1v1h-1zM928 121h1v1h-1zM927 116h1v1h-1zM927 122h1v1h-1zM937 118h1v1h-1zM937 120h1v1h-1zM936 117h1v1h-1zM936 121h1v1h-1zM935 116h1v1h-1zM935 122h1v1h-1zM945 118h1v1h-1zM945 120h1v1h-1zM944 117h1v1h-1zM944 121h1v1h-1zM943 116h1v1h-1zM943 122h1v1h-1z" fill="#0c0c78"/>
<rect x="157" y="135" width="792" height="1" fill="#0f74b4"/>
<path d="M161 134h1v1h-1zM161 136h1v1h-1zM160 133h1v1h-1zM160 137h1v1h-1zM159 132h1v1h-1zM159 138h1v1h-1zM169 134h1v1h-1zM169 136h1v1h-1zM168 133h1v1h-1zM168 137h1v1h-1zM167 132h1v1h-1zM167 138h1v1h-1zM177 134h1v1h-1zM177 136h1v1h-1zM176 133h1v1h-1zM176 137h1v1h-1zM175 132h1v1h-1zM175 138h1v1h-1zM185 134h1v1h-1zM185 136h1v1h-1zM184 133h1v1h-1zM184 137h1v1h-1zM183 132h1v1h-1zM183 138h1v1h-1zM193 134h1v1h-1zM193 136h1v1h-1zM192 133h1v1h-1zM192 137h1v1h-1zM191 132h1v1h-1zM191 138h1v1h-1zM201 134h1v1h-1zM201 136h1v1h-1zM200 133h1v1h-1zM200 137h1v1h-1zM199 132h1v1h-1zM199 138h1v1h-1zM209 134h1v1h-1zM209 136h1v1h-1zM208 133h1v1h-1zM208 137h1v1h-1zM207 132h1v1h-1zM207 138h1v1h-1zM217 134h1v1h-1zM217 136h1v1h-1zM216 133h1v1h-1zM216 137h1v1h-1zM215 132h1v1h-1zM215 138h1v1h-1zM225 134h1v1h-1zM225 136h1v1h-1zM224 133h1v1h-1zM224 137h1v1h-1zM223 132h1v1h-1zM223 138h1v1h-1zM233 134h1v1h-1zM233 136h1v1h-1zM232 133h1v1h-1zM232 137h1v1h-1zM231 132h1v1h-1zM231 138h1v1h-1zM241 134h1v1h-1zM241 136h1v1h-1zM240 133h1v1h-1zM240 137h1v1h-1zM239 132h1v1h-1zM239 138h1v1h-1zM249 134h1v1h-1zM249 136h1v1h-1zM248 133h1v1h-1zM248 137h1v1h-1zM247 132h1v1h-1zM247 138h1v1h-1zM257 134h1v1h-1zM257 136h1v1h-1zM256 133h1v1h-1zM256 137h1v1h-1zM255 132h1v1h-1zM255 138h1v1h-1zM265 134h1v1h-1zM265 136h1v1h-1zM264 133h1v1h-1zM264 137h1v1h-1zM263 132h1v1h-1zM263 138h1v1h-1zM273 134h1v1h-1zM273 136h1v1h-1zM272 133h1v1h-1zM272 137h1v1h-1zM271 132h1v1h-1zM271 138h1v1h-1zM281 134h1v1h-1zM281 136h1v1h-1zM280 133h1v1h-1zM280 137h1v1h-1zM279 132h1v1h-1zM279 138h1v1h-1zM289 134h1v1h-1zM289 136h1v1h-1zM288 133h1v1h-1zM288 137h1v1h-1zM287 132h1v1h-1zM287 138h1v1h-1zM297 134h1v1h-1zM297 136h1v1h-1zM296 133h1v1h-1zM296 137h1v1h-1zM295 132h1v1h-1zM295 138h1v1h-1zM305 134h1v1h-1zM305 136h1v1h-1zM304 133h1v1h-1zM304 137h1v1h-1zM303 132h1v1h-1zM303 138h1v1h-1zM313 134h1v1h-1zM313 136h1v1h-1zM312 133h1v1h-1zM312 137h1v1h-1zM311 132h1v1h-1zM311 138h1v1h-1zM321 134h1v1h-1zM321 136h1v1h-1zM320 133h1v1h-1zM320 137h1v1h-1zM319 132h1v1h-1zM319 138h1v1h-1zM329 134h1v1h-1zM329 136h1v1h-1zM328 133h1v1h-1zM328 137h1v1h-1zM327 132h1v1h-1zM327 138h1v1h-1zM337 134h1v1h-1zM337 136h1v1h-1zM336 133h1v1h-1zM336 137h1v1h-1zM335 132h1v1h-1zM335 138h1v1h-1zM345 134h1v1h-1zM345 136h1v1h-1zM344 133h1v1h-1zM344 137h1v1h-1zM343 132h1v1h-1zM343 138h1v1h-1zM353 134h1v1h-1zM353 136h1v1h-1zM352 133h1v1h-1zM352 137h1v1h-1zM351 132h1v1h-1zM351 138h1v1h-1zM361 134h1v1h-1zM361 136h1v1h-1zM360 133h1v1h-1zM360 137h1v1h-1zM359 132h1v1h-1zM359 138h1v1h-1zM369 134h1v1h-1zM369 136h1v1h-1zM368 133h1v1h-1zM368 137h1v1h-1zM367 132h1v1h-1zM367 138h1v1h-1zM377 134h1v1h-1zM377 136h1v1h-1zM376 133h1v1h-1zM376 137h1v1h-1zM375 132h1v1h-1zM375 138h1v1h-1zM385 134h1v1h-1zM385 136h1v1h-1zM384 133h1v1h-1zM384 137h1v1h-1zM383 132h1v1h-1zM383 138h1v1h-1zM393 134h1v1h-1zM393 136h1v1h-1zM392 133h1v1h-1zM392 137h1v1h-1zM391 132h1v1h-1zM391 138h1v1h-1zM401 134h1v1h-1zM401 136h1v1h-1zM400 133h1v1h-1zM400 137h1v1h-1zM399 132h1v1h-1zM399 138h1v1h-1zM409 134h1v1h-1zM409 136h1v1h-1zM408 133h1v1h-1zM408 137h1v1h-1zM407 132h1v1h-1zM407 138h1v1h-1zM417 134h1v1h-1zM417 136h1v1h-1zM416 133h1v1h-1zM416 137h1v1h-1zM415 132h1v1h-1zM415 138h1v1h-1zM425 134h1v1h-1zM425 136h1v1h-1zM424 133h1v1h-1zM424 137h1v1h-1zM423 132h1v1h-1zM423 138h1v1h-1zM433 134h1v1h-1zM433 136h1v1h-1zM432 133h1v1h-1zM432 137h1v1h-1zM431 132h1v1h-1zM431 138h1v1h-1zM441 134h1v1h-1zM441 136h1v1h-1zM440 133h1v1h-1zM440 137h1v1h-1zM439 132h1v1h-1zM439 138h1v1h-1zM449 134h1v1h-1zM449 136h1v1h-1zM448 133h1v1h-1zM448 137h1v1h-1zM447 132h1v1h-1zM447 138h1v1h-1zM457 134h1v1h-1zM457 136h1v1h-1zM456 133h1v1h-1zM456 137h1v1h-1zM455 132h1v1h-1zM455 138h1v1h-1zM465 134h1v1h-1zM465 136h1v1h-1zM464 133h1v1h-1zM464 137h1v1h-1zM463 132h1v1h-1zM463 138h1v1h-1zM473 134h1v1h-1zM473 136h1v1h-1zM472 133h1v1h-1zM472 137h1v1h-1zM471 132h1v1h-1zM471 138h1v1h-1zM481 134h1v1h-1zM481 136h1v1h-1zM480 133h1v1h-1zM480 137h1v1h-1zM479 132h1v1h-1zM479 138h1v1h-1zM489 134h1v1h-1zM489 136h1v1h-1zM488 133h1v1h-1zM488 137h1v1h-1zM487 132h1v1h-1zM487 138h1v1h-1zM497 134h1v1h-1zM497 136h1v1h-1zM496 133h1v1h-1zM496 137h1v1h-1zM495 132h1v1h-1zM495 138h1v1h-1zM505 134h1v1h-1zM505 136h1v1h-1zM504 133h1v1h-1zM504 137h1v1h-1zM503 132h1v1h-1zM503 138h1v1h-1zM513 134h1v1h-1zM513 136h1v1h-1zM512 133h1v1h-1zM512 137h1v1h-1zM511 132h1v1h-1zM511 138h1v1h-1zM521 134h1v1h-1zM521 136h1v1h-1zM520 133h1v1h-1zM520 137h1v1h-1zM519 132h1v1h-1zM519 138h1v1h-1zM529 134h1v1h-1zM529 136h1v1h-1zM528 133h1v1h-1zM528 137h1v1h-1zM527 132h1v1h-1zM527 138h1v1h-1zM537 134h1v1h-1zM537 136h1v1h-1zM536 133h1v1h-1zM536 137h1v1h-1zM535 132h1v1h-1zM535 138h1v1h-1zM545 134h1v1h-1zM545 136h1v1h-1zM544 133h1v1h-1zM544 137h1v1h-1zM543 132h1v1h-1zM543 138h1v1h-1zM553 134h1v1h-1zM553 136h1v1h-1zM552 133h1v1h-1zM552 137h1v1h-1zM551 132h1v1h-1zM551 138h1v1h-1zM561 134h1v1h-1zM561 136h1v1h-1zM560 133h1v1h-1zM560 137h1v1h-1zM559 132h1v1h-1zM559 138h1v1h-1zM569 134h1v1h-1zM569 136h1v1h-1zM568 133h1v1h-1zM568 137h1v1h-1zM567 132h1v1h-1zM567 138h1v1h-1zM577 134h1v1h-1zM577 136h1v1h-1zM576 133h1v1h-1zM576 137h1v1h-1zM575 132h1v1h-1zM575 138h1v1h-1zM585 134h1v1h-1zM585 136h1v1h-1zM584 133h1v1h-1zM584 137h1v1h-1zM583 132h1v1h-1zM583 138h1v1h-1zM593 134h1v1h-1zM593 136h1v1h-1zM592 133h1v1h-1zM592 137h1v1h-1zM591 132h1v1h-1zM591 138h1v1h-1zM601 134h1v1h-1zM601 136h1v1h-1zM600 133h1v1h-1zM600 137h1v1h-1zM599 132h1v1h-1zM599 138h1v1h-1zM609 134h1v1h-1zM609 136h1v1h-1zM608 133h1v1h-1zM608 137h1v1h-1zM607 132h1v1h-1zM607 138h1v1h-1zM617 134h1v1h-1zM617 136h1v1h-1zM616 133h1v1h-1zM616 137h1v1h-1zM615 132h1v1h-1zM615 138h1v1h-1zM625 134h1v1h-1zM625 136h1v1h-1zM624 133h1v1h-1zM624 137h1v1h-1zM623 132h1v1h-1zM623 138h1v1h-1zM633 134h1v1h-1zM633 136h1v1h-1zM632 133h1v1h-1zM632 137h1v1h-1zM631 132h1v1h-1zM631 138h1v1h-1zM641 134h1v1h-1zM641 136h1v1h-1zM640 133h1v1h-1zM640 137h1v1h-1zM639 132h1v1h-1zM639 138h1v1h-1zM649 134h1v1h-1zM649 136h1v1h-1zM648 133h1v1h-1zM648 137h1v1h-1zM647 132h1v1h-1zM647 138h1v1h-1zM657 134h1v1h-1zM657 136h1v1h-1zM656 133h1v1h-1zM656 137h1v1h-1zM655 132h1v1h-1zM655 138h1v1h-1zM665 134h1v1h-1zM665 136h1v1h-1zM664 133h1v1h-1zM664 137h1v1h-1zM663 132h1v1h-1zM663 138h1v1h-1zM673 134h1v1h-1zM673 136h1v1h-1zM672 133h1v1h-1zM672 137h1v1h-1zM671 132h1v1h-1zM671 138h1v1h-1zM681 134h1v1h-1zM681 136h1v1h-1zM680 133h1v1h-1zM680 137h1v1h-1zM679 132h1v1h-1zM679 138h1v1h-1zM689 134h1v1h-1zM689 136h1v1h-1zM688 133h1v1h-1zM688 137h1v1h-1zM687 132h1v1h-1zM687 138h1v1h-1zM697 134h1v1h-1zM697 136h1v1h-1zM696 133h1v1h-1zM696 137h1v1h-1zM695 132h1v1h-1zM695 138h1v1h-1zM705 134h1v1h-1zM705 136h1v1h-1zM704 133h1v1h-1zM704 137h1v1h-1zM703 132h1v1h-1zM703 138h1v1h-1zM713 134h1v1h-1zM713 136h1v1h-1zM712 133h1v1h-1zM712 137h1v1h-1zM711 132h1v1h-1zM711 138h1v1h-1zM721 134h1v1h-1zM721 136h1v1h-1zM720 133h1v1h-1zM720 137h1v1h-1zM719 132h1v1h-1zM719 138h1v1h-1zM729 134h1v1h-1zM729 136h1v1h-1zM728 133h1v1h-1zM728 137h1v1h-1zM727 132h1v1h-1zM727 138h1v1h-1zM737 134h1v1h-1zM737 136h1v1h-1zM736 133h1v1h-1zM736 137h1v1h-1zM735 132h1v1h-1zM735 138h1v1h-1zM745 134h1v1h-1zM745 136h1v1h-1zM744 133h1v1h-1zM744 137h1v1h-1zM743 132h1v1h-1zM743 138h1v1h-1zM753 134h1v1h-1zM753 136h1v1h-1zM752 133h1v1h-1zM752 137h1v1h-1zM751 132h1v1h-1zM751 138h1v1h-1zM761 134h1v1h-1zM761 136h1v1h-1zM760 133h1v1h-1zM760 137h1v1h-1zM759 132h1v1h-1zM759 138h1v1h-1zM769 134h1v1h-1zM769 136h1v1h-1zM768 133h1v1h-1zM768 137h1v1h-1zM767 132h1v1h-1zM767 138h1v1h-1zM777 134h1v1h-1zM777 136h1v1h-1zM776 133h1v1h-1zM776 137h1v1h-1zM775 132h1v1h-1zM775 138h1v1h-1zM785 134h1v1h-1zM785 136h1v1h-1zM784 133h1v1h-1zM784 137h1v1h-1zM783 132h1v1h-1zM783 138h1v1h-1zM793 134h1v1h-1zM793 136h1v1h-1zM792 133h1v1h-1zM792 137h1v1h-1zM791 132h1v1h-1zM791 138h1v1h-1zM801 134h1v1h-1zM801 136h1v1h-1zM800 133h1v1h-1zM800 137h1v1h-1zM799 132h1v1h-1zM799 138h1v1h-1zM809 134h1v1h-1zM809 136h1v1h-1zM808 133h1v1h-1zM808 137h1v1h-1zM807 132h1v1h-1zM807 138h1v1h-1zM817 134h1v1h-1zM817 136h1v1h-1zM816 133h1v1h-1zM816 137h1v1h-1zM815 132h1v1h-1zM815 138h1v1h-1zM825 134h1v1h-1zM825 136h1v1h-1zM824 133h1v1h-1zM824 137h1v1h-1zM823 132h1v1h-1zM823 138h1v1h-1zM833 134h1v1h-1zM833 136h1v1h-1zM832 133h1v1h-1zM832 137h1v1h-1zM831 132h1v1h-1zM831 138h1v1h-1zM841 134h1v1h-1zM841 136h1v1h-1zM840 133h1v1h-1zM840 137h1v1h-1zM839 132h1v1h-1zM839 138h1v1h-1zM849 134h1v1h-1zM849 136h1v1h-1zM848 133h1v1h-1zM848 137h1v1h-1zM847 132h1v1h-1zM847 138h1v1h-1zM857 134h1v1h-1zM857 136h1v1h-1zM856 133h1v1h-1zM856 137h1v1h-1zM855 132h1v1h-1zM855 138h1v1h-1zM865 134h1v1h-1zM865 136h1v1h-1zM864 133h1v1h-1zM864 137h1v1h-1zM863 132h1v1h-1zM863 138h1v1h-1zM873 134h1v1h-1zM873 136h1v1h-1zM872 133h1v1h-1zM872 137h1v1h-1zM871 132h1v1h-1zM871 138h1v1h-1zM881 134h1v1h-1zM881 136h1v1h-1zM880 133h1v1h-1zM880 137h1v1h-1zM879 132h1v1h-1zM879 138h1v1h-1zM889 134h1v1h-1zM889 136h1v1h-1zM888 133h1v1h-1zM888 137h1v1h-1zM887 132h1v1h-1zM887 138h1v1h-1zM897 134h1v1h-1zM897 136h1v1h-1zM896 133h1v1h-1zM896 137h1v1h-1zM895 132h1v1h-1zM895 138h1v1h-1zM905 134h1v1h-1zM905 136h1v1h-1zM904 133h1v1h-1zM904 137h1v1h-1zM903 132h1v1h-1zM903 138h1v1h-1zM913 134h1v1h-1zM913 136h1v1h-1zM912 133h1v1h-1zM912 137h1v1h-1zM911 132h1v1h-1zM911 138h1v1h-1zM921 134h1v1h-1zM921 136h1v1h-1zM920 133h1v1h-1zM920 137h1v1h-1zM919 132h1v1h-1zM919 138h1v1h-1zM929 134h1v1h-1zM929 136h1v1h-1zM928 133h1v1h-1zM928 137h1v1h-1zM927 132h1v1h-1zM927 138h1v1h-1zM937 134h1v1h-1zM937 136h1v1h-1zM936 133h1v1h-1zM936 137h1v1h-1zM935 132h1v1h-1zM935 138h1v1h-1zM945 134h1v1h-1zM945 136h1v1h-1zM944 133h1v1h-1zM944 137h1v1h-1zM943 132h1v1h-1zM943 138h1v1h-1z" fill="#0f74b4"/>
</g>
<g id="tracks">
<rect x="157" y="166" width="792" height="1" fill="#0c0c78"/>
<rect x="156" y="237" width="793" height="15" fill="#034d03"/>
<rect x="156" y="300" width="378" height="52" fill="#f3f3f3"/>
<rect x="157" y="301" width="376" height="50" fill="#fff"/>
<rect x="156" y="327" width="5" height="24" fill="#FFA54F"/>
<rect x="163" y="328" width="5" height="23" fill="#EE9A00"/>
<rect x="170" y="328" width="5" height="23" fill="#8FBC8F"/>
<rect x="177" y="318" width="5" height="33" fill="#8B1C62"/>
<rect x="184" y="319" width="5" height="32" fill="#EE6A50"/>
<rect x="191" y="317" width="5" height="34" fill="#FF0000"/>
<rect x="198" y="323" width="5" height="28" fill="#CDB79E"/>
<rect x="205" y="320" width="5" height="31" fill="#EEEE00"/>
<rect x="212" y="316" width="5" height="35" fill="#EEEE00"/>
<rect x="219" y="316" width="5" height="35" fill="#EEEE00"/>
<rect x="226" y="300" width="5" height="51" fill="#EEEE00"/>
<rect x="233" y="305" width="5" height="46" fill="#EEEE00"/>
<rect x="240" y="314" width="5" height="37" fill="#EEEE00"/>
<rect x="247" y="308" width="5" height="43" fill="#EEEE00"/>
<rect x="254" y="320" width="5" height="31" fill="#EEEE00"/>
<rect x="261" y="314" width="5" height="37" fill="#EEEE00"/>
<rect x="268" y="317" width="5" height="34" fill="#EEEE00"/>
<rect x="275" y="317" width="5" height="34" fill="#EEEE00"/>
<rect x="282" y="318" width="5" height="33" fill="#EEEE00"/>
<rect x="289" y="320" width="5" height="31" fill="#EEEE00"/>
<rect x="296" y="325" width="5" height="26" fill="#00CDCD"/>
<rect x="303" y="327" width="5" height="24" fill="#EE82EE"/>
<rect x="310" y="327" width="5" height="24" fill="#9AC0CD"/>
<rect x="317" y="325" width="5" height="26" fill="#EED5D2"/>
<rect x="324" y="325" width="5" height="26" fill="#EED5D2"/>
<rect x="331" y="320" width="5" height="31" fill="#CDB79E"/>
<rect x="338" y="326" width="5" height="25" fill="#EEC591"/>
<rect x="345" y="321" width="5" height="30" fill="#8B7355"/>
<rect x="352" y="331" width="5" height="20" fill="#8B7355"/>
<rect x="359" y="320" width="5" height="31" fill="#CDAA7D"/>
<rect x="366" y="324" width="5" height="27" fill="#EED5D2"/>
<rect x="373" y="326" width="5" height="25" fill="#B452CD"/>
<rect x="380" y="329" width="5" height="22" fill="#7A378B"/>
<rect x="387" y="327" width="5" height="24" fill="#CDB79E"/>
<rect x="394" y="324" width="5" height="27" fill="#CDB79E"/>
<rect x="401" y="334" width="5" height="17" fill="#CDB79E"/>
<rect x="408" y="323" width="5" height="28" fill="#9ACD32"/>
<rect x="415" y="327" width="5" height="24" fill="#CDB79E"/>
<rect x="422" y="329" width="5" height="22" fill="#7A67EE"/>
<rect x="429" y="322" width="5" height="29" fill="#FFD700"/>
<rect x="436" y="326" width="5" height="25" fill="#FFB6C1"/>
<rect x="443" y="338" width="5" height="13" fill="#CD9B1D"/>
<rect x="450" y="318" width="5" height="33" fill="#B4EEB4"/>
<rect x="457" y="323" width="5" height="28" fill="#D9D9D9"/>
<rect x="464" y="329" width="5" height="22" fill="#3A5FCD"/>
<rect x="471" y="329" width="5" height="22" fill="#1E90FF"/>
<rect x="478" y="330" width="5" height="21" fill="#CDB79E"/>
<rect x="485" y="322" width="5" height="29" fill="#CDB79E"/>
<rect x="492" y="330" width="5" height="21" fill="#FFD39B"/>
<rect x="499" y="320" width="5" height="31" fill="#A6A6A6"/>
<rect x="506" y="323" width="5" height="28" fill="#008B45"/>
<rect x="513" y="323" width="5" height="28" fill="#EED5D2"/>
<rect x="520" y="326" width="5" height="25" fill="#EED5D2"/>
<rect x="527" y="342" width="5" height="9" fill="#FF00FF"/>
<rect x="156" y="352" width="793" height="2" fill="#000070"/>
<rect x="156" y="400" width="793" height="1" fill="#34346c"/>
</g>
<g id="multiz">
<rect x="601" y="550" width="7" height="1" fill="#8888bc"/>
<rect x="601" y="553" width="7" height="1" fill="#8888bc"/>
<rect x="637" y="550" width="7" height="1" fill="#8888bc"/>
<rect x="637" y="553" width="7" height="1" fill="#8888bc"/>
<rect x="169" y="580" width="7" height="1" fill="#8888bc"/>
<rect x="169" y="583" width="7" height="1" fill="#8888bc"/>
<rect x="205" y="580" width="7" height="1" fill="#8888bc"/>
<rect x="205" y="583" width="7" height="1" fill="#8888bc"/>
<rect x="241" y="580" width="7" height="1" fill="#8888bc"/>
<rect x="241" y="583" width="7" height="1" fill="#8888bc"/>
<rect x="277" y="580" width="7" height="1" fill="#8888bc"/>
<rect x="277" y="583" width="7" height="1" fill="#8888bc"/>
<rect x="313" y="580" width="7" height="1" fill="#8888bc"/>
<rect x="313" y="583" width="7" height="1" fill="#8888bc"/>
<rect x="349" y="580" width="7" height="1" fill="#8888bc"/>
<rect x="349" y="583" width="7" height="1" fill="#8888bc"/>
<rect x="385" y="580" width="7" height="1" fill="#8888bc"/>
<rect x="385" y="583" width="7" height="1" fill="#8888bc"/>
<rect x="421" y="580" width="7" height="1" fill="#8888bc"/>
<rect x="421" y="583" width="7" height="1" fill="#8888bc"/>
<rect x="457" y="580" width="7" height="1" fill="#8888bc"/>
<rect x="457" y="583" width="7" height="1" fill="#8888bc"/>
<rect x="493" y="580" width="7" height="1" fill="#8888bc"/>
<rect x="493" y="583" width="7" height="1" fill="#8888bc"/>
<rect x="529" y="580" width="7" height="1" fill="#8888bc"/>
<rect x="529" y="583" width="7" height="1" fill="#8888bc"/>
<rect x="565" y="580" width="7" height="1" fill="#8888bc"/>
<rect x="565" y="583" width="7" height="1" fill="#8888bc"/>
<rect x="601" y="580" width="7" height="1" fill="#8888bc"/>
<rect x="601" y="583" width="7" height="1" fill="#8888bc"/>
<rect x="637" y="580" width="7" height="1" fill="#8888bc"/>
<rect x="637" y="583" width="7" height="1" fill="#8888bc"/>
<rect x="673" y="580" width="7" height="1" fill="#8888bc"/>
<rect x="673" y="583" width="7" height="1" fill="#8888bc"/>
<rect x="709" y="580" width="7" height="1" fill="#8888bc"/>
<rect x="709" y="583" width="7" height="1" fill="#8888bc"/>
<rect x="745" y="580" width="7" height="1" fill="#8888bc"/>
<rect x="745" y="583" width="7" height="1" fill="#8888bc"/>
<rect x="781" y="580" width="7" height="1" fill="#8888bc"/>
<rect x="781" y="583" width="7" height="1" fill="#8888bc"/>
<rect x="817" y="580" width="7" height="1" fill="#8888bc"/>
<rect x="817" y="583" width="7" height="1" fill="#8888bc"/>
<rect x="853" y="580" width="7" height="1" fill="#8888bc"/>
<rect x="853" y="583" width="7" height="1" fill="#8888bc"/>
<rect x="889" y="580" width="7" height="1" fill="#8888bc"/>
<rect x="889" y="583" width="7" height="1" fill="#8888bc"/>
<rect x="925" y="580" width="7" height="1" fill="#8888bc"/>
<rect x="925" y="583" width="7" height="1" fill="#8888bc"/>
<rect x="169" y="595" width="7" height="1" fill="#8888bc"/>
<rect x="169" y="598" width="7" height="1" fill="#8888bc"/>
<rect x="205" y="595" width="7" height="1" fill="#8888bc"/>
<rect x="205" y="598" width="7" height="1" fill="#8888bc"/>
<rect x="241" y="595" width="7" height="1" fill="#8888bc"/>
<rect x="241" y="598" width="7" height="1" fill="#8888bc"/>
<rect x="277" y="595" width="7" height="1" fill="#8888bc"/>
<rect x="277" y="598" width="7" height="1" fill="#8888bc"/>
<rect x="313" y="595" width="7" height="1" fill="#8888bc"/>
<rect x="313" y="598" width="7" height="1" fill="#8888bc"/>
<rect x="349" y="595" width="7" height="1" fill="#8888bc"/>
<rect x="349" y="598" width="7" height="1" fill="#8888bc"/>
<rect x="385" y="595" width="7" height="1" fill="#8888bc"/>
<rect x="385" y="598" width="7" height="1" fill="#8888bc"/>
<rect x="421" y="595" width="7" height="1" fill="#8888bc"/>
<rect x="421" y="598" width="7" height="1" fill="#8888bc"/>
<rect x="457" y="595" width="7" height="1" fill="#8888bc"/>
<rect x="457" y="598" width="7" height="1" fill="#8888bc"/>
<rect x="493" y="595" width="7" height="1" fill="#8888bc"/>
<rect x="493" y="598" width="7" height="1" fill="#8888bc"/>
<rect x="529" y="595" width="7" height="1" fill="#8888bc"/>
<rect x="529" y="598" width="7" height="1" fill="#8888bc"/>
<rect x="565" y="595" width="7" height="1" fill="#8888bc"/>
<rect x="565" y="598" width="7" height="1" fill="#8888bc"/>
<rect x="601" y="595" width="7" height="1" fill="#8888bc"/>
<rect x="601" y="598" width="7" height="1" fill="#8888bc"/>
<rect x="637" y="595" width="7" height="1" fill="#8888bc"/>
<rect x="637" y="598" width="7" height="1" fill="#8888bc"/>
<rect x="673" y="595" width="7" height="1" fill="#8888bc"/>
<rect x="673" y="598" width="7" height="1" fill="#8888bc"/>
<rect x="709" y="595" width="7" height="1" fill="#8888bc"/>
<rect x="709" y="598" width="7" height="1" fill="#8888bc"/>
<rect x="745" y="595" width="7" height="1" fill="#8888bc"/>
<rect x="745" y="598" width="7" height="1" fill="#8888bc"/>
<rect x="781" y="595" width="7" height="1" fill="#8888bc"/>
<rect x="781" y="598" width="7" height="1" fill="#8888bc"/>
<rect x="817" y="595" width="7" height="1" fill="#8888bc"/>
<rect x="817" y="598" width="7" height="1" fill="#8888bc"/>
<rect x="853" y="595" width="7" height="1" fill="#8888bc"/>
<rect x="853" y="598" width="7" height="1" fill="#8888bc"/>
<rect x="889" y="595" width="7" height="1" fill="#8888bc"/>
<rect x="889" y="598" width="7" height="1" fill="#8888bc"/>
<rect x="925" y="595" width="7" height="1" fill="#8888bc"/>
<rect x="925" y="598" width="7" height="1" fill="#8888bc"/>
<rect x="169" y="610" width="7" height="1" fill="#8888bc"/>
<rect x="169" y="613" width="7" height="1" fill="#8888bc"/>
<rect x="205" y="610" width="7" height="1" fill="#8888bc"/>
<rect x="205" y="613" width="7" height="1" fill="#8888bc"/>
<rect x="241" y="610" width="7" height="1" fill="#8888bc"/>
<rect x="241" y="613" width="7" height="1" fill="#8888bc"/>
<rect x="277" y="610" width="7" height="1" fill="#8888bc"/>
<rect x="277" y="613" width="7" height="1" fill="#8888bc"/>
<rect x="313" y="610" width="7" height="1" fill="#8888bc"/>
<rect x="313" y="613" width="7" height="1" fill="#8888bc"/>
<rect x="349" y="610" width="7" height="1" fill="#8888bc"/>
<rect x="349" y="613" width="7" height="1" fill="#8888bc"/>
<rect x="385" y="610" width="7" height="1" fill="#8888bc"/>
<rect x="385" y="613" width="7" height="1" fill="#8888bc"/>
<rect x="421" y="610" width="7" height="1" fill="#8888bc"/>
<rect x="421" y="613" width="7" height="1" fill="#8888bc"/>
<rect x="457" y="610" width="7" height="1" fill="#8888bc"/>
<rect x="457" y="613" width="7" height="1" fill="#8888bc"/>
<rect x="493" y="610" width="7" height="1" fill="#8888bc"/>
<rect x="493" y="613" width="7" height="1" fill="#8888bc"/>
<rect x="529" y="610" width="7" height="1" fill="#8888bc"/>
<rect x="529" y="613" width="7" height="1" fill="#8888bc"/>
<rect x="565" y="610" width="7" height="1" fill="#8888bc"/>
<rect x="565" y="613" width="7" height="1" fill="#8888bc"/>
<rect x="601" y="610" width="7" height="1" fill="#8888bc"/>
<rect x="601" y="613" width="7" height="1" fill="#8888bc"/>
<rect x="637" y="610" width="7" height="1" fill="#8888bc"/>
<rect x="637" y="613" width="7" height="1" fill="#8888bc"/>
<rect x="673" y="610" width="7" height="1" fill="#8888bc"/>
<rect x="673" y="613" width="7" height="1" fill="#8888bc"/>
<rect x="709" y="610" width="7" height="1" fill="#8888bc"/>
<rect x="709" y="613" width="7" height="1" fill="#8888bc"/>
<rect x="745" y="610" width="7" height="1" fill="#8888bc"/>
<rect x="745" y="613" width="7" height="1" fill="#8888bc"/>
<rect x="781" y="610" width="7" height="1" fill="#8888bc"/>
<rect x="781" y="613" width="7" height="1" fill="#8888bc"/>
<rect x="817" y="610" width="7" height="1" fill="#8888bc"/>
<rect x="817" y="613" width="7" height="1" fill="#8888bc"/>
<rect x="853" y="610" width="7" height="1" fill="#8888bc"/>
<rect x="853" y="613" width="7" height="1" fill="#8888bc"/>
<rect x="889" y="610" width="7" height="1" fill="#8888bc"/>
<rect x="889" y="613" width="7" height="1" fill="#8888bc"/>
<rect x="925" y="610" width="7" height="1" fill="#8888bc"/>
<rect x="925" y="613" width="7" height="1" fill="#8888bc"/>
<rect x="480" y="542" width="1" height="14" fill="#e4860e"/>
</g>
<g id="labels" transform="scale(1,1.035)" stroke="#000" stroke-width="0.15">
<text x="152" y="12.08" text-anchor="end" textLength="96.1">Window Position</text>
<text x="151.8" y="28.31" text-anchor="end" textLength="32.5">Scale</text>
<text x="152" y="45.22" text-anchor="end" textLength="28.9">chr1:</text>
<text x="151.2" y="60.39" text-anchor="end" textLength="20.6">---&gt;</text>
<text x="552.6" y="10.92" text-anchor="middle" textLength="398.7">Human Feb. 2009 (GRCh37/hg19)   chr1:7,623,370-7,623,391 (22 bp)</text>
<text x="368" y="28.02" text-anchor="end" textLength="51.4">10 bases</text>
<text x="742.2" y="28.02" textLength="28">hg19</text>
<text x="370.2" y="45.41" text-anchor="end" textLength="57">7,623,375</text>
<text x="550.2" y="45.41" text-anchor="end" textLength="57">7,623,380</text>
<text x="730.2" y="45.41" text-anchor="end" textLength="57">7,623,385</text>
<text x="910.2" y="45.41" text-anchor="end" textLength="57">7,623,390</text>
<text x="172.0" y="58.65" font-size="13.3" text-anchor="middle">G</text>
<text x="208.03" y="58.65" font-size="13.3" text-anchor="middle">A</text>
<text x="244.06" y="58.65" font-size="13.3" text-anchor="middle">G</text>
<text x="280.09" y="58.65" font-size="13.3" text-anchor="middle">A</text>
<text x="316.12" y="58.65" font-size="13.3" text-anchor="middle">G</text>
<text x="352.15" y="58.65" font-size="13.3" text-anchor="middle">G</text>
<text x="388.18" y="58.65" font-size="13.3" text-anchor="middle">C</text>
<text x="424.21" y="58.65" font-size="13.3" text-anchor="middle">A</text>
<text x="460.24" y="58.65" font-size="13.3" text-anchor="middle">G</text>
<text x="496.27" y="58.65" font-size="13.3" text-anchor="middle">G</text>
<text x="532.3" y="58.65" font-size="13.3" text-anchor="middle">G</text>
<text x="568.33" y="58.65" font-size="13.3" text-anchor="middle">A</text>
<text x="604.36" y="58.65" font-size="13.3" text-anchor="middle">T</text>
<text x="640.39" y="58.65" font-size="13.3" text-anchor="middle">G</text>
<text x="676.42" y="58.65" font-size="13.3" text-anchor="middle">G</text>
<text x="712.45" y="58.65" font-size="13.3" text-anchor="middle">G</text>
<text x="748.48" y="58.65" font-size="13.3" text-anchor="middle">G</text>
<text x="784.51" y="58.65" font-size="13.3" text-anchor="middle">G</text>
<text x="820.54" y="58.65" font-size="13.3" text-anchor="middle">T</text>
<text x="856.57" y="58.65" font-size="13.3" text-anchor="middle">G</text>
<text x="892.6" y="58.65" font-size="13.3" text-anchor="middle">G</text>
<text x="928.63" y="58.65" font-size="13.3" text-anchor="middle">G</text>
<text x="552.3" y="74.98" text-anchor="middle" textLength="240.4">GENCODE V49lift37 (2 items filtered out)</text>
<text x="150.9" y="88.89" fill="#0c0c78" stroke="#0c0c78" text-anchor="end" textLength="51.8">CAMTA1</text>
<text x="150.9" y="104.35" fill="#0c0c78" stroke="#0c0c78" text-anchor="end" textLength="51.8">CAMTA1</text>
<text x="150.9" y="119.81" fill="#0c0c78" stroke="#0c0c78" text-anchor="end" textLength="51.8">CAMTA1</text>
<text x="150.9" y="135.27" fill="#0f74b4" stroke="#0f74b4" text-anchor="end" textLength="51.8">CAMTA1</text>
<text x="552.7" y="150.72" font-size="11.0" text-anchor="middle" textLength="123.4">RefSeq genes from NCBI</text>
<text x="152.5" y="164.73" fill="#0c0c78" stroke="#0c0c78" text-anchor="end" textLength="91.9">RefSeq Curated</text>
<text x="552.6" y="180.68" font-size="11.0" text-anchor="middle" textLength="215">Publications: Sequences in Scientific Articles</text>
<text x="151.3" y="194.4" text-anchor="end" textLength="65.1">Sequences</text>
<text x="151.2" y="210.82" text-anchor="end" textLength="33.2">SNPs</text>
<text x="552.4" y="227.15" fill="#0a5a0a" stroke="#0a5a0a" text-anchor="middle" textLength="370.2">OMIM Gene Phenotypes - Dark Green Can Be Disease-causing</text>
<text x="151.2" y="240.77" fill="#0a5a0a" stroke="#0a5a0a" text-anchor="end" textLength="77.3">OMIM Genes</text>
<text x="552.2" y="255.65" font-size="11.0" text-anchor="middle" textLength="232.7">Short Genetic Variants from dbSNP release 155</text>
<text x="152" y="270.34" text-anchor="end" textLength="126">Common dbSNP(155)</text>
<text x="552.15" y="286.96" text-anchor="middle" textLength="572.5">Gene Expression in 54 tissues from GTEx RNA-seq of 17382 samples, 948 donors (V8, Aug 2019)</text>
<text x="150.9" y="321.74" text-anchor="end" textLength="52.2">CAMTA1</text>
<text x="551.8" y="356.71" text-anchor="middle" textLength="541.4">H3K27Ac Mark (Often Found Near Active Regulatory Elements) on 7 cell lines from ENCODE</text>
<text x="13" y="370.05" textLength="104.6">Layered H3K27Ac</text>
<text x="552.3" y="400.97" fill="#3c3c96" stroke="#3c3c96" text-anchor="middle" textLength="293.6">100 vertebrates Basewise Conservation by PhyloP</text>
<text x="152" y="400.0" fill="#3c3c96" stroke="#3c3c96" text-anchor="end" textLength="36.1">4.88 _</text>
<text x="13.2" y="423.96" fill="#3c3c96" stroke="#3c3c96" textLength="86.0">100 Vert. Cons</text>
<text x="152" y="448.12" fill="#8c3c3c" stroke="#8c3c3c" text-anchor="end" textLength="33.2">-4.5 _</text>
<text x="552.4" y="464.83" fill="#0c0c78" stroke="#0c0c78" text-anchor="middle" textLength="215.4">Multiz Alignments of 100 Vertebrates</text>
<text x="152" y="478.26" fill="#e4860e" stroke="#e4860e" text-anchor="end" textLength="31.1">Gaps</text>
<text x="152" y="492.75" fill="#0c0c78" stroke="#0c0c78" text-anchor="end" textLength="41.9">Human</text>
<text x="172.0" y="492.66" fill="#10106a" stroke="#10106a" font-size="13.3" text-anchor="middle">G</text>
<text x="208.03" y="492.66" fill="#10106a" stroke="#10106a" font-size="13.3" text-anchor="middle">A</text>
<text x="244.06" y="492.66" fill="#10106a" stroke="#10106a" font-size="13.3" text-anchor="middle">G</text>
<text x="280.09" y="492.66" fill="#10106a" stroke="#10106a" font-size="13.3" text-anchor="middle">A</text>
<text x="316.12" y="492.66" fill="#10106a" stroke="#10106a" font-size="13.3" text-anchor="middle">G</text>
<text x="352.15" y="492.66" fill="#10106a" stroke="#10106a" font-size="13.3" text-anchor="middle">G</text>
<text x="388.18" y="492.66" fill="#10106a" stroke="#10106a" font-size="13.3" text-anchor="middle">C</text>
<text x="424.21" y="492.66" fill="#10106a" stroke="#10106a" font-size="13.3" text-anchor="middle">A</text>
<text x="460.24" y="492.66" fill="#10106a" stroke="#10106a" font-size="13.3" text-anchor="middle">G</text>
<text x="496.27" y="492.66" fill="#10106a" stroke="#10106a" font-size="13.3" text-anchor="middle">G</text>
<text x="532.3" y="492.66" fill="#10106a" stroke="#10106a" font-size="13.3" text-anchor="middle">G</text>
<text x="568.33" y="492.66" fill="#10106a" stroke="#10106a" font-size="13.3" text-anchor="middle">A</text>
<text x="604.36" y="492.66" fill="#10106a" stroke="#10106a" font-size="13.3" text-anchor="middle">T</text>
<text x="640.39" y="492.66" fill="#10106a" stroke="#10106a" font-size="13.3" text-anchor="middle">G</text>
<text x="676.42" y="492.66" fill="#10106a" stroke="#10106a" font-size="13.3" text-anchor="middle">G</text>
<text x="712.45" y="492.66" fill="#10106a" stroke="#10106a" font-size="13.3" text-anchor="middle">G</text>
<text x="748.48" y="492.66" fill="#10106a" stroke="#10106a" font-size="13.3" text-anchor="middle">G</text>
<text x="784.51" y="492.66" fill="#10106a" stroke="#10106a" font-size="13.3" text-anchor="middle">G</text>
<text x="820.54" y="492.66" fill="#10106a" stroke="#10106a" font-size="13.3" text-anchor="middle">T</text>
<text x="856.57" y="492.66" fill="#10106a" stroke="#10106a" font-size="13.3" text-anchor="middle">G</text>
<text x="892.6" y="492.66" fill="#10106a" stroke="#10106a" font-size="13.3" text-anchor="middle">G</text>
<text x="928.63" y="492.66" fill="#10106a" stroke="#10106a" font-size="13.3" text-anchor="middle">G</text>
<text x="152" y="507.25" fill="#0c0c78" stroke="#0c0c78" text-anchor="end" textLength="44.1">Rhesus</text>
<text x="172.0" y="507.15" fill="#10106a" stroke="#10106a" font-size="13.3" text-anchor="middle">G</text>
<text x="208.03" y="507.15" fill="#10106a" stroke="#10106a" font-size="13.3" text-anchor="middle">A</text>
<text x="244.06" y="507.15" fill="#10106a" stroke="#10106a" font-size="13.3" text-anchor="middle">G</text>
<text x="280.09" y="507.15" fill="#10106a" stroke="#10106a" font-size="13.3" text-anchor="middle">A</text>
<text x="316.12" y="507.15" fill="#10106a" stroke="#10106a" font-size="13.3" text-anchor="middle">G</text>
<text x="352.15" y="507.15" fill="#10106a" stroke="#10106a" font-size="13.3" text-anchor="middle">G</text>
<text x="388.18" y="507.15" fill="#10106a" stroke="#10106a" font-size="13.3" text-anchor="middle">C</text>
<text x="424.21" y="507.15" fill="#10106a" stroke="#10106a" font-size="13.3" text-anchor="middle">A</text>
<text x="460.24" y="507.15" fill="#10106a" stroke="#10106a" font-size="13.3" text-anchor="middle">G</text>
<text x="496.27" y="507.15" fill="#10106a" stroke="#10106a" font-size="13.3" text-anchor="middle">G</text>
<text x="532.3" y="507.15" fill="#10106a" stroke="#10106a" font-size="13.3" text-anchor="middle">G</text>
<text x="568.33" y="507.15" fill="#10106a" stroke="#10106a" font-size="13.3" text-anchor="middle">A</text>
<text x="604.36" y="507.15" fill="#10106a" stroke="#10106a" font-size="13.3" text-anchor="middle">T</text>
<text x="640.39" y="507.15" fill="#10106a" stroke="#10106a" font-size="13.3" text-anchor="middle">G</text>
<text x="676.42" y="507.15" fill="#10106a" stroke="#10106a" font-size="13.3" text-anchor="middle">G</text>
<text x="712.45" y="507.15" fill="#10106a" stroke="#10106a" font-size="13.3" text-anchor="middle">G</text>
<text x="748.48" y="507.15" fill="#10106a" stroke="#10106a" font-size="13.3" text-anchor="middle">G</text>
<text x="784.51" y="507.15" fill="#10106a" stroke="#10106a" font-size="13.3" text-anchor="middle">G</text>
<text x="820.54" y="507.15" fill="#10106a" stroke="#10106a" font-size="13.3" text-anchor="middle">T</text>
<text x="856.57" y="507.15" fill="#10106a" stroke="#10106a" font-size="13.3" text-anchor="middle">G</text>
<text x="892.6" y="507.15" fill="#8c8cb4" stroke="#8c8cb4" font-size="13.3" text-anchor="middle">A</text>
<text x="928.63" y="507.15" fill="#10106a" stroke="#10106a" font-size="13.3" text-anchor="middle">G</text>
<text x="152" y="521.74" fill="#0a5a0a" stroke="#0a5a0a" text-anchor="end" textLength="39.0">Mouse</text>
<text x="172.0" y="521.64" fill="#10106a" stroke="#10106a" font-size="13.3" text-anchor="middle">G</text>
<text x="208.03" y="521.64" fill="#10106a" stroke="#10106a" font-size="13.3" text-anchor="middle">A</text>
<text x="244.06" y="521.64" fill="#10106a" stroke="#10106a" font-size="13.3" text-anchor="middle">G</text>
<text x="280.09" y="521.64" fill="#8c8cb4" stroke="#8c8cb4" font-size="13.3" text-anchor="middle">G</text>
<text x="316.12" y="521.64" fill="#8c8cb4" stroke="#8c8cb4" font-size="13.3" text-anchor="middle">A</text>
<text x="352.15" y="521.64" fill="#10106a" stroke="#10106a" font-size="13.3" text-anchor="middle">G</text>
<text x="388.18" y="521.64" fill="#10106a" stroke="#10106a" font-size="13.3" text-anchor="middle">C</text>
<text x="424.21" y="521.64" fill="#8c8cb4" stroke="#8c8cb4" font-size="13.3" text-anchor="middle">C</text>
<text x="460.24" y="521.64" fill="#8c8cb4" stroke="#8c8cb4" font-size="13.3" text-anchor="middle">T</text>
<text x="496.27" y="521.64" fill="#10106a" stroke="#10106a" font-size="13.3" text-anchor="middle">G</text>
<text x="532.3" y="521.64" fill="#10106a" stroke="#10106a" font-size="13.3" text-anchor="middle">G</text>
<text x="568.33" y="521.64" fill="#8c8cb4" stroke="#8c8cb4" font-size="13.3" text-anchor="middle">G</text>
<text x="604.36" y="521.64" fill="#10106a" stroke="#10106a" font-size="13.3" text-anchor="middle">T</text>
<text x="640.39" y="521.64" fill="#8c8cb4" stroke="#8c8cb4" font-size="13.3" text-anchor="middle">A</text>
<text x="676.42" y="521.64" fill="#10106a" stroke="#10106a" font-size="13.3" text-anchor="middle">G</text>
<text x="712.45" y="521.64" fill="#8c8cb4" stroke="#8c8cb4" font-size="13.3" text-anchor="middle">C</text>
<text x="748.48" y="521.64" fill="#8c8cb4" stroke="#8c8cb4" font-size="13.3" text-anchor="middle">-</text>
<text x="784.51" y="521.64" fill="#8c8cb4" stroke="#8c8cb4" font-size="13.3" text-anchor="middle">A</text>
<text x="820.54" y="521.64" fill="#8c8cb4" stroke="#8c8cb4" font-size="13.3" text-anchor="middle">C</text>
<text x="856.57" y="521.64" fill="#8c8cb4" stroke="#8c8cb4" font-size="13.3" text-anchor="middle">T</text>
<text x="892.6" y="521.64" fill="#10106a" stroke="#10106a" font-size="13.3" text-anchor="middle">G</text>
<text x="928.63" y="521.64" fill="#10106a" stroke="#10106a" font-size="13.3" text-anchor="middle">G</text>
<text x="152" y="536.23" fill="#0c0c78" stroke="#0c0c78" text-anchor="end" textLength="23.8">Dog</text>
<text x="172.0" y="536.14" fill="#8c8cb4" stroke="#8c8cb4" font-size="13.3" text-anchor="middle">A</text>
<text x="208.03" y="536.14" fill="#10106a" stroke="#10106a" font-size="13.3" text-anchor="middle">A</text>
<text x="244.06" y="536.14" fill="#10106a" stroke="#10106a" font-size="13.3" text-anchor="middle">G</text>
<text x="280.09" y="536.14" fill="#8c8cb4" stroke="#8c8cb4" font-size="13.3" text-anchor="middle">G</text>
<text x="316.12" y="536.14" fill="#8c8cb4" stroke="#8c8cb4" font-size="13.3" text-anchor="middle">C</text>
<text x="352.15" y="536.14" fill="#8c8cb4" stroke="#8c8cb4" font-size="13.3" text-anchor="middle">A</text>
<text x="388.18" y="536.14" fill="#8c8cb4" stroke="#8c8cb4" font-size="13.3" text-anchor="middle">G</text>
<text x="424.21" y="536.14" fill="#8c8cb4" stroke="#8c8cb4" font-size="13.3" text-anchor="middle">G</text>
<text x="460.24" y="536.14" fill="#10106a" stroke="#10106a" font-size="13.3" text-anchor="middle">G</text>
<text x="496.27" y="536.14" fill="#8c8cb4" stroke="#8c8cb4" font-size="13.3" text-anchor="middle">A</text>
<text x="532.3" y="536.14" fill="#8c8cb4" stroke="#8c8cb4" font-size="13.3" text-anchor="middle">C</text>
<text x="568.33" y="536.14" fill="#10106a" stroke="#10106a" font-size="13.3" text-anchor="middle">A</text>
<text x="676.42" y="536.14" fill="#10106a" stroke="#10106a" font-size="13.3" text-anchor="middle">G</text>
<text x="712.45" y="536.14" fill="#10106a" stroke="#10106a" font-size="13.3" text-anchor="middle">G</text>
<text x="748.48" y="536.14" fill="#10106a" stroke="#10106a" font-size="13.3" text-anchor="middle">G</text>
<text x="784.51" y="536.14" fill="#10106a" stroke="#10106a" font-size="13.3" text-anchor="middle">G</text>
<text x="820.54" y="536.14" fill="#8c8cb4" stroke="#8c8cb4" font-size="13.3" text-anchor="middle">C</text>
<text x="856.57" y="536.14" fill="#8c8cb4" stroke="#8c8cb4" font-size="13.3" text-anchor="middle">A</text>
<text x="892.6" y="536.14" fill="#10106a" stroke="#10106a" font-size="13.3" text-anchor="middle">G</text>
<text x="928.63" y="536.14" fill="#10106a" stroke="#10106a" font-size="13.3" text-anchor="middle">G</text>
<text x="152" y="550.72" fill="#0a5a0a" stroke="#0a5a0a" text-anchor="end" textLength="51.3">Elephant</text>
<text x="172.0" y="550.63" fill="#8c8cb4" stroke="#8c8cb4" font-size="13.3" text-anchor="middle">A</text>
<text x="208.03" y="550.63" fill="#8c8cb4" stroke="#8c8cb4" font-size="13.3" text-anchor="middle">G</text>
<text x="244.06" y="550.63" fill="#8c8cb4" stroke="#8c8cb4" font-size="13.3" text-anchor="middle">A</text>
<text x="280.09" y="550.63" fill="#10106a" stroke="#10106a" font-size="13.3" text-anchor="middle">A</text>
<text x="316.12" y="550.63" fill="#10106a" stroke="#10106a" font-size="13.3" text-anchor="middle">G</text>
<text x="352.15" y="550.63" fill="#8c8cb4" stroke="#8c8cb4" font-size="13.3" text-anchor="middle">A</text>
<text x="388.18" y="550.63" fill="#8c8cb4" stroke="#8c8cb4" font-size="13.3" text-anchor="middle">G</text>
<text x="424.21" y="550.63" fill="#10106a" stroke="#10106a" font-size="13.3" text-anchor="middle">A</text>
<text x="460.24" y="550.63" fill="#10106a" stroke="#10106a" font-size="13.3" text-anchor="middle">G</text>
<text x="496.27" y="550.63" fill="#10106a" stroke="#10106a" font-size="13.3" text-anchor="middle">G</text>
<text x="532.3" y="550.63" fill="#10106a" stroke="#10106a" font-size="13.3" text-anchor="middle">G</text>
<text x="568.33" y="550.63" fill="#10106a" stroke="#10106a" font-size="13.3" text-anchor="middle">A</text>
<text x="604.36" y="550.63" fill="#8c8cb4" stroke="#8c8cb4" font-size="13.3" text-anchor="middle">A</text>
<text x="640.39" y="550.63" fill="#8c8cb4" stroke="#8c8cb4" font-size="13.3" text-anchor="middle">-</text>
<text x="676.42" y="550.63" fill="#8c8cb4" stroke="#8c8cb4" font-size="13.3" text-anchor="middle">-</text>
<text x="712.45" y="550.63" fill="#8c8cb4" stroke="#8c8cb4" font-size="13.3" text-anchor="middle">-</text>
<text x="748.48" y="550.63" fill="#8c8cb4" stroke="#8c8cb4" font-size="13.3" text-anchor="middle">-</text>
<text x="784.51" y="550.63" fill="#8c8cb4" stroke="#8c8cb4" font-size="13.3" text-anchor="middle">-</text>
<text x="820.54" y="550.63" fill="#8c8cb4" stroke="#8c8cb4" font-size="13.3" text-anchor="middle">-</text>
<text x="856.57" y="550.63" fill="#8c8cb4" stroke="#8c8cb4" font-size="13.3" text-anchor="middle">A</text>
<text x="892.6" y="550.63" fill="#10106a" stroke="#10106a" font-size="13.3" text-anchor="middle">G</text>
<text x="928.63" y="550.63" fill="#10106a" stroke="#10106a" font-size="13.3" text-anchor="middle">G</text>
<text x="152" y="565.22" fill="#0a5a0a" stroke="#0a5a0a" text-anchor="end" textLength="47.0">Chicken</text>
<text x="152" y="579.71" fill="#0c0c78" stroke="#0c0c78" text-anchor="end" textLength="67.2">X_tropicalis</text>
<text x="152" y="594.2" fill="#0a5a0a" stroke="#0a5a0a" text-anchor="end" textLength="54.2">Zebrafish</text>
<text x="553.1" y="609.66" text-anchor="middle" textLength="223.9">Repeating Elements by RepeatMasker</text>
<text x="152" y="623.19" text-anchor="end" textLength="84.5">RepeatMasker</text>
</g>
<g id="logo">
<rect x="158" y="443" width="28" height="1" fill="#0000ff" opacity="0.45"/>
<rect x="158" y="443" width="6" height="1" fill="#0000ff" opacity="0.9"/>
<rect x="160" y="444" width="28" height="1" fill="#0000ff" opacity="0.4"/>
<rect x="183" y="444" width="5" height="1" fill="#0000ff" opacity="0.95"/>
<rect x="158" y="445" width="25" height="1" fill="#ff0000" opacity="0.35"/>
<rect x="303" y="443" width="28" height="1" fill="#0000ff" opacity="0.45"/>
<rect x="303" y="443" width="6" height="1" fill="#0000ff" opacity="0.9"/>
<rect x="305" y="444" width="28" height="1" fill="#0000ff" opacity="0.35"/>
<rect x="328" y="444" width="5" height="1" fill="#0000ff" opacity="0.95"/>
<rect x="303" y="444" width="27" height="1" fill="#ff0000" opacity="0.3"/>
<rect x="304" y="445" width="27" height="1" fill="#ff0000" opacity="0.3"/>
<rect x="304" y="446" width="8" height="1" fill="#a0a000" opacity="0.7"/>
<rect x="320" y="446" width="10" height="1" fill="#a0a000" opacity="0.4"/>
<rect x="344" y="443" width="22" height="1" fill="#0000ff" opacity="0.85"/>
<rect x="343" y="446" width="22" height="1" fill="#0000ff" opacity="0.75"/>
<rect x="339" y="444" width="5" height="2" fill="#0000ff"/>
<rect x="341" y="443" width="4" height="1" fill="#0000ff" opacity="0.5"/>
<rect x="364" y="445" width="5" height="2" fill="#0000ff"/>
<rect x="363" y="444" width="4" height="1" fill="#0000ff" opacity="0.5"/>
<rect x="356" y="445" width="9" height="1" fill="#0000ff" opacity="0.45"/>
<rect x="339" y="447" width="25" height="1" fill="#ff0000" opacity="0.4"/>
<rect x="379" y="443" width="23" height="1" fill="#a0a000" opacity="0.45"/>
<rect x="397" y="443" width="5" height="1" fill="#a0a000" opacity="0.8"/>
<rect x="379" y="445" width="23" height="1" fill="#a0a000" opacity="0.45"/>
<rect x="397" y="445" width="5" height="1" fill="#a0a000" opacity="0.8"/>
<rect x="375" y="444" width="5" height="1" fill="#a0a000"/>
<rect x="377" y="443" width="4" height="1" fill="#a0a000" opacity="0.7"/>
<rect x="377" y="445" width="4" height="1" fill="#a0a000" opacity="0.7"/>
<polyline points="411,445.5 422.5,443.5 428.5,443.5 438,445.5" fill="none" stroke="#ff0000" stroke-width="1.2" shape-rendering="auto"/>
<rect x="411" y="446" width="30" height="1" fill="#0000ff" opacity="0.4"/>
<rect x="411" y="446" width="4" height="1" fill="#0000ff" opacity="0.9"/>
<rect x="437" y="446" width="4" height="1" fill="#0000ff" opacity="0.9"/>
<rect x="447" y="441" width="30" height="1" fill="#0000ff" opacity="0.3"/>
<rect x="447" y="441" width="6" height="1" fill="#0000ff" opacity="0.85"/>
<rect x="469" y="441" width="8" height="1" fill="#0000ff" opacity="0.85"/>
<rect x="483" y="441" width="30" height="1" fill="#0000ff" opacity="0.3"/>
<rect x="483" y="441" width="6" height="1" fill="#0000ff" opacity="0.85"/>
<rect x="505" y="441" width="8" height="1" fill="#0000ff" opacity="0.85"/>
<rect x="628" y="443" width="29" height="1" fill="#0000ff" opacity="0.3"/>
<rect x="628" y="443" width="6" height="1" fill="#0000ff" opacity="0.85"/>
<rect x="649" y="443" width="8" height="1" fill="#0000ff" opacity="0.85"/>
<rect x="664" y="441" width="29" height="1" fill="#0000ff" opacity="0.3"/>
<rect x="664" y="441" width="6" height="1" fill="#0000ff" opacity="0.85"/>
<rect x="685" y="441" width="8" height="1" fill="#0000ff" opacity="0.85"/>
<rect x="772" y="441" width="30" height="1" fill="#0000ff" opacity="0.3"/>
<rect x="772" y="441" width="6" height="1" fill="#0000ff" opacity="0.85"/>
<rect x="794" y="441" width="8" height="1" fill="#0000ff" opacity="0.85"/>
<rect x="524" y="443" width="22" height="1" fill="#0000ff" opacity="0.85"/>
<rect x="523" y="445" width="22" height="1" fill="#0000ff" opacity="0.75"/>
<rect x="519" y="444" width="5" height="1" fill="#0000ff"/>
<rect x="521" y="443" width="4" height="1" fill="#0000ff" opacity="0.5"/>
<rect x="544" y="444" width="5" height="1" fill="#0000ff"/>
<rect x="543" y="444" width="4" height="1" fill="#0000ff" opacity="0.5"/>
<rect x="536" y="444" width="9" height="1" fill="#0000ff" opacity="0.45"/>
<polyline points="555,445.5 566.5,443.5 572.5,443.5 582,445.5" fill="none" stroke="#ff0000" stroke-width="1.2" shape-rendering="auto"/>
<rect x="555" y="446" width="30" height="1" fill="#0000ff" opacity="0.4"/>
<rect x="555" y="446" width="4" height="1" fill="#0000ff" opacity="0.9"/>
<rect x="581" y="446" width="4" height="1" fill="#0000ff" opacity="0.9"/>
<rect x="590" y="443" width="26" height="1" fill="#00ff00" opacity="0.55"/>
<rect x="601" y="443" width="4" height="4" fill="#00ff00"/>
<rect x="735" y="440" width="26" height="1" fill="#0000ff" opacity="0.35"/>
<rect x="735" y="440" width="6" height="1" fill="#0000ff" opacity="0.9"/>
<rect x="738" y="441" width="27" height="1" fill="#0000ff" opacity="0.35"/>
<rect x="759" y="441" width="6" height="1" fill="#0000ff" opacity="0.95"/>
<rect x="807" y="443" width="27" height="1" fill="#a0a000" opacity="0.3"/>
<rect x="807" y="443" width="5" height="1" fill="#a0a000" opacity="0.8"/>
<rect x="829" y="443" width="5" height="1" fill="#a0a000" opacity="0.8"/>
<rect x="842" y="443" width="26" height="1" fill="#00ff00" opacity="0.55"/>
<rect x="853" y="443" width="4" height="4" fill="#00ff00"/>
<rect x="848" y="447" width="22" height="1" fill="#0000ff" opacity="0.85"/>
<rect x="847" y="450" width="22" height="1" fill="#0000ff" opacity="0.75"/>
<rect x="843" y="448" width="5" height="2" fill="#0000ff"/>
<rect x="845" y="447" width="4" height="1" fill="#0000ff" opacity="0.5"/>
<rect x="868" y="449" width="5" height="2" fill="#0000ff"/>
<rect x="867" y="448" width="4" height="1" fill="#0000ff" opacity="0.5"/>
<rect x="860" y="449" width="9" height="1" fill="#0000ff" opacity="0.45"/>
<path d="M477.6 489.1 C479 488.6 479.9 487.8 480.3 486.7 L481.3 486.7 L481.3 494.5 L480.1 494.5 L480.1 488.9 C479.5 489.5 478.6 489.9 477.6 490.2 Z" fill="#e4860e" transform="translate(-0.4,0)" shape-rendering="auto"/>
</g>
</svg>
</body></html>
